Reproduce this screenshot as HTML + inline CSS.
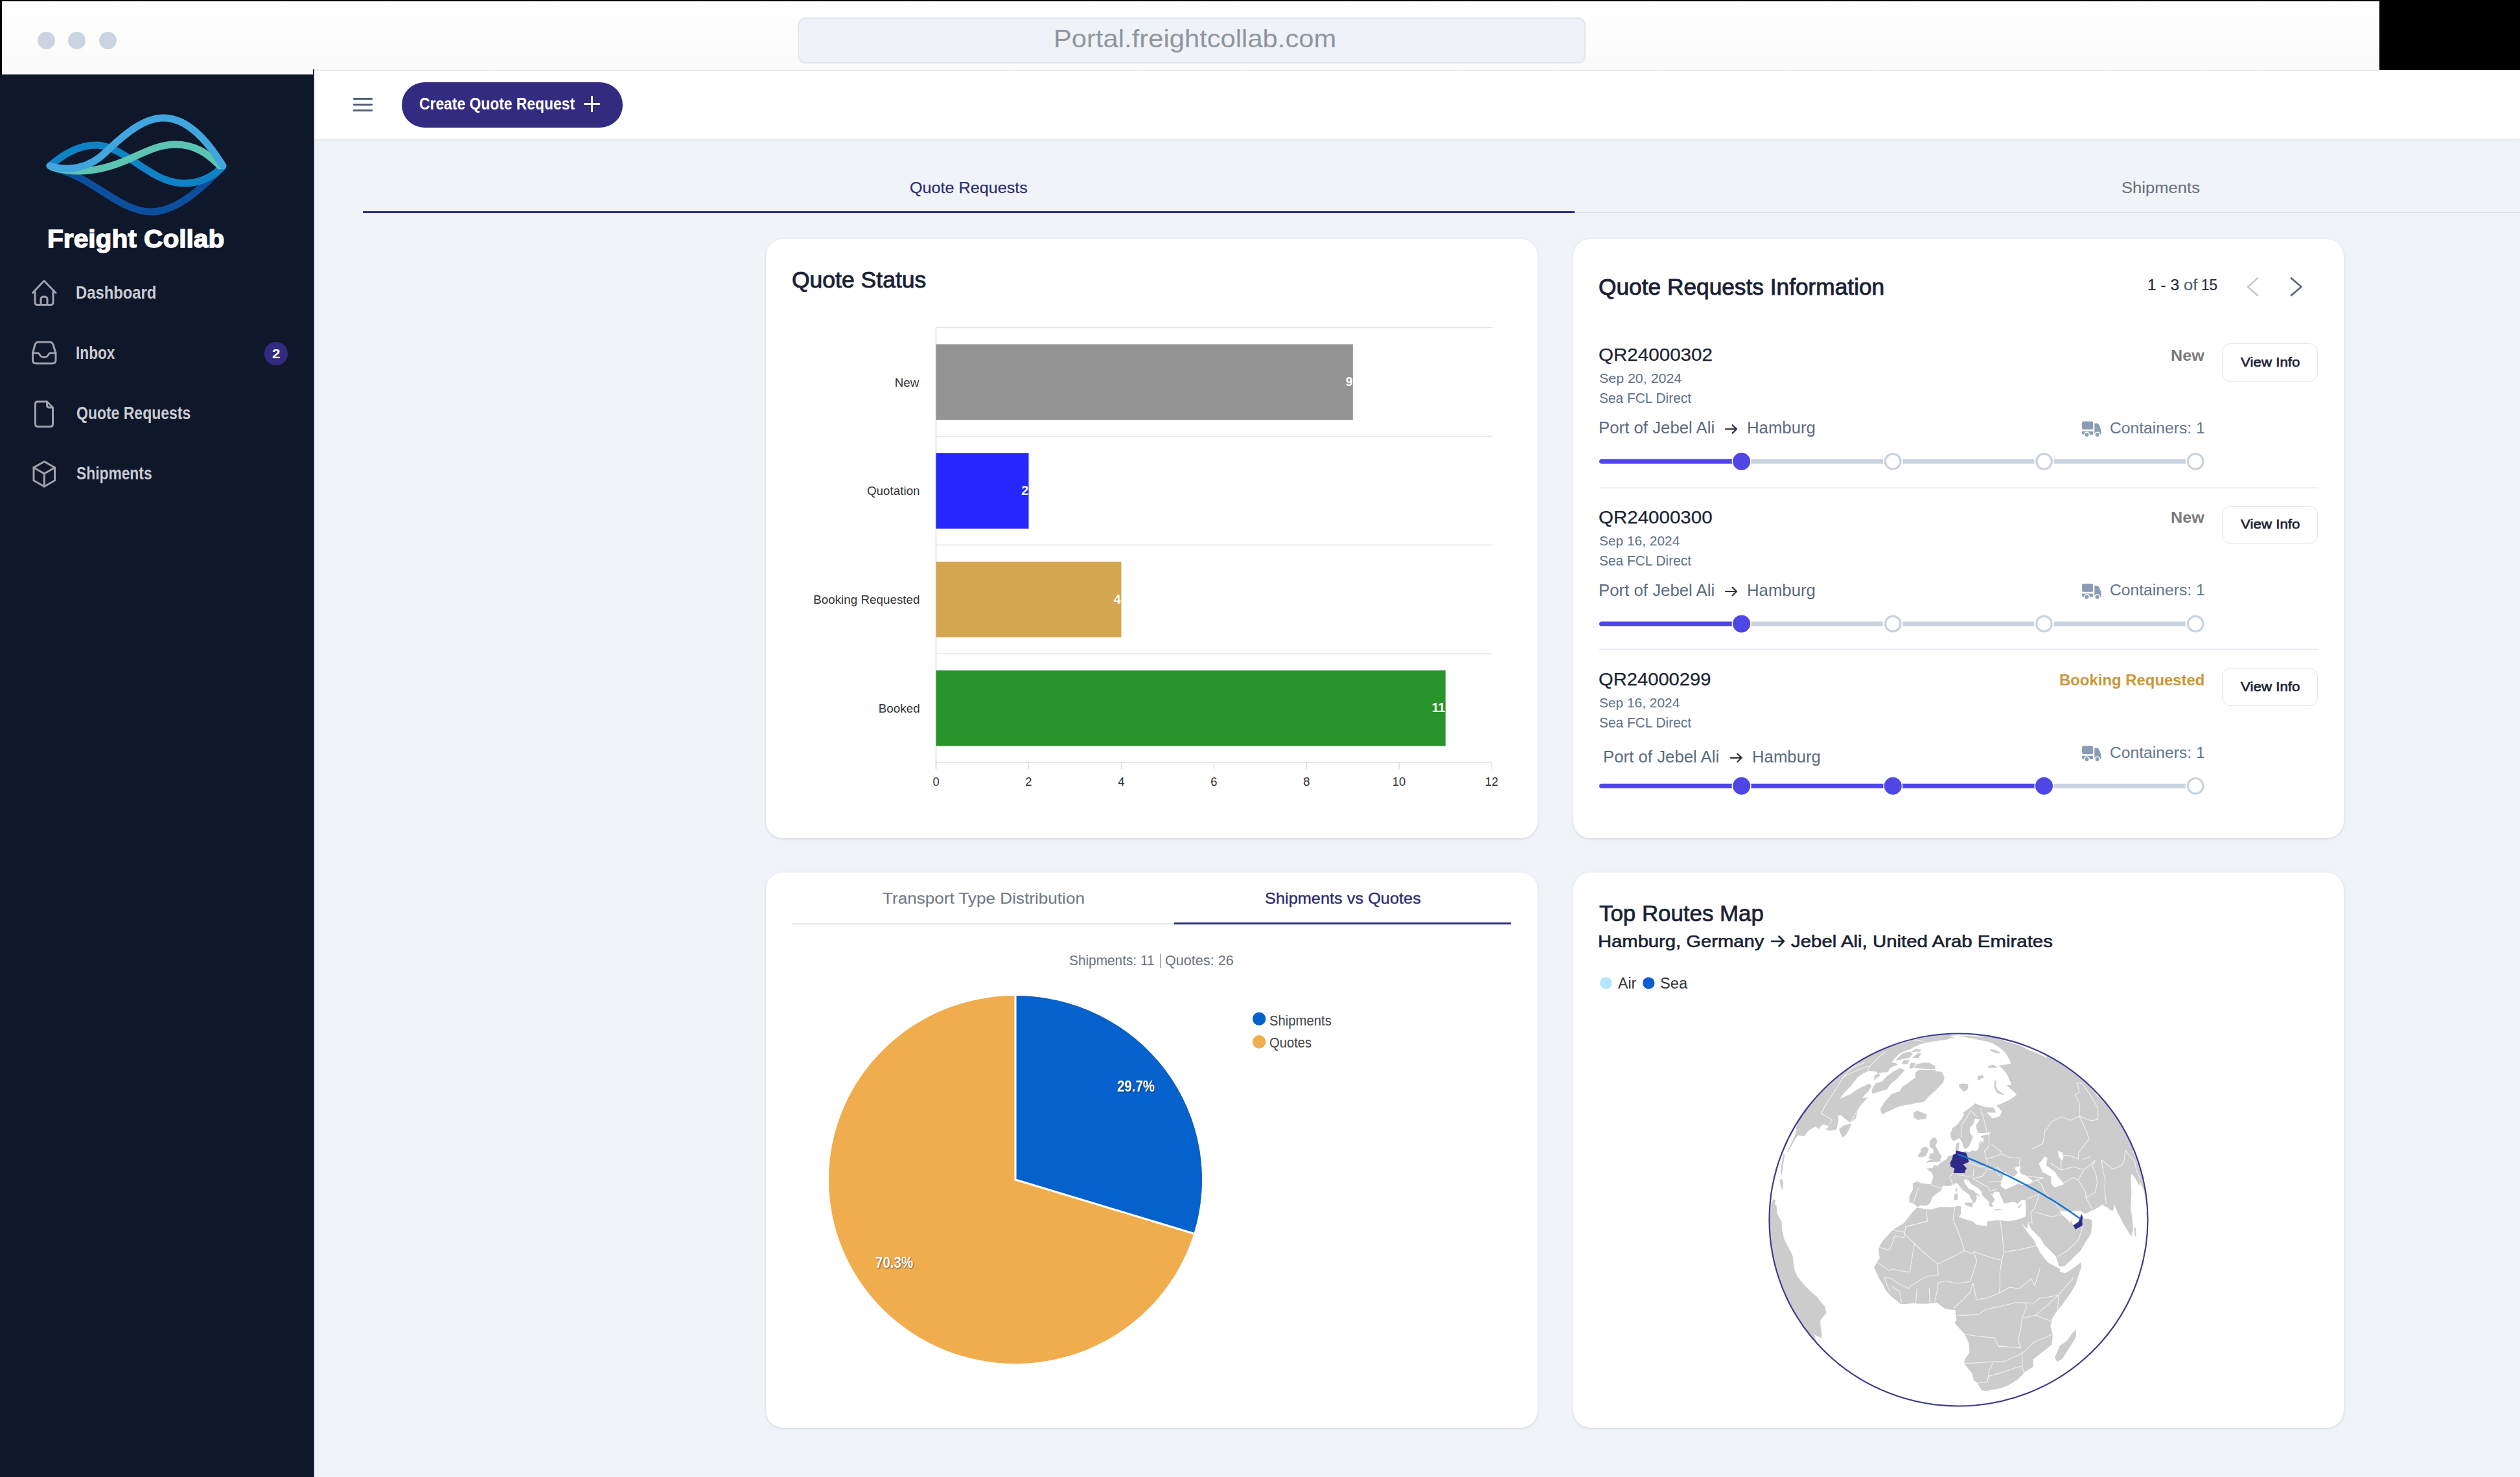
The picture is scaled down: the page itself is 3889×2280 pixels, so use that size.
<!DOCTYPE html>
<html><head><meta charset="utf-8"><style>
html,body{margin:0;padding:0;width:3889px;height:2280px;overflow:hidden;background:#000}
body{position:relative;font-family:"Liberation Sans",sans-serif}
.t{position:absolute;white-space:nowrap;line-height:1;transform-origin:0 0}
</style></head><body>
<div style="position:absolute;left:0;top:0;width:3889px;height:2280px;background:#000"></div>
<div style="position:absolute;left:3px;top:2px;width:3669px;height:113px;background:linear-gradient(#ffffff,#fafafa);border-bottom:1px solid #dfe6e9;box-sizing:border-box"></div>
<div style="position:absolute;left:57.5px;top:48.5px;width:27px;height:27px;border-radius:50%;background:#cbd5e1"></div>
<div style="position:absolute;left:104.5px;top:48.5px;width:27px;height:27px;border-radius:50%;background:#cbd5e1"></div>
<div style="position:absolute;left:152.5px;top:48.5px;width:27px;height:27px;border-radius:50%;background:#cbd5e1"></div>
<div style="position:absolute;left:1231px;top:27px;width:1216px;height:71px;box-sizing:border-box;border:2px solid #e2e7ec;border-radius:12px;background:#eff2f6"></div>
<div style="position:absolute;left:0;top:115px;width:485px;height:2165px;background:#0f172a"></div>
<svg style="position:absolute;left:0;top:0" width="485" height="420" viewBox="0 0 485 420" fill="none" stroke-linecap="round" stroke-linejoin="round">
<path d="M90,262 C140,272 185,327 233,327 C272,327 310,292 343,258" stroke="#0b4f9d" stroke-width="11"/>
<path d="M77,256 C100,236 125,224 148,224 C192,224 232,283 284,283 C311,283 330,271 343,258" stroke="#0f82c6" stroke-width="11"/>
<path d="M80,258 C120,270 160,264 205,243 C233,230 250,223 270,223 C300,223 320,236 339,256" stroke="#5bc4b3" stroke-width="11"/>
<path d="M77,256 C105,265 137,260 162,236 C192,207 222,182 252,182 C288,182 318,214 344,256" stroke="#42a6de" stroke-width="11"/>
</svg>
<svg style="position:absolute;left:0;top:0" width="485" height="800" viewBox="0 0 485 800" fill="none" stroke="#9ea3ad" stroke-width="3" stroke-linecap="round" stroke-linejoin="round">
<path d="M50.5,452 L68,433.5 L86,452"/>
<path d="M54,448 V467 Q54,470.5 57.5,470.5 H78.5 Q82,470.5 82,467 V448"/>
<path d="M63,470.5 V462 Q63,458 68,458 Q73,458 73,462 V470.5"/>
<path d="M50.5,545 V556 Q50.5,561 55.5,561 H81 Q86,561 86,556 V545 L82,532 Q80.5,528 76,528 H60 Q55.5,528 54,532 Z"/>
<path d="M50.5,545 H58 Q60,545 61,547 Q63,551.5 68,551.5 Q73,551.5 75,547 Q76,545 78,545 H86"/>
<path d="M58,620 H72.5 L81.5,629 V654.5 Q81.5,658.5 77.5,658.5 H58.5 Q54.5,658.5 54.5,654.5 V623.5 Q54.5,620 58,620 Z"/>
<path d="M72.5,620 V625.5 Q72.5,629 76,629 H81.5"/>
<path d="M68.3,712.5 L84.5,721.8 V741.8 L68.3,751 L52,741.8 V721.8 Z"/>
<path d="M52,721.8 L68.3,731.3 L84.5,721.8 M68.3,731.3 V751"/>
</svg>
<div style="position:absolute;left:408.4px;top:528.4px;width:35.2px;height:35.2px;border-radius:50%;background:#312c80"></div>
<div style="position:absolute;left:485px;top:215px;width:3404px;height:2065px;background:#f0f3f8"></div>
<div style="position:absolute;left:485px;top:107.5px;width:3404px;height:107.5px;background:#ffffff;border-top:1px solid #dfe6e9;box-sizing:border-box;box-shadow:0 1px 3px rgba(0,0,0,0.08)"></div>
<div style="position:absolute;left:544.6px;top:151.10000000000002px;width:30.2px;height:2.5px;border-radius:1px;background:#4f5f77"></div>
<div style="position:absolute;left:544.6px;top:160.4px;width:30.2px;height:2.5px;border-radius:1px;background:#4f5f77"></div>
<div style="position:absolute;left:544.6px;top:169.3px;width:30.2px;height:2.5px;border-radius:1px;background:#4f5f77"></div>
<div style="position:absolute;left:620.4px;top:127px;width:340.5px;height:70px;border-radius:35px;background:#322b80"></div>
<div style="position:absolute;left:901px;top:159.3px;width:25px;height:2.8px;background:#fff"></div>
<div style="position:absolute;left:912.1px;top:148px;width:2.8px;height:25px;background:#fff"></div>
<div style="position:absolute;left:2429.5px;top:326.5px;width:1460px;height:2px;background:#dde4ea"></div>
<div style="position:absolute;left:559.5px;top:325.5px;width:1870px;height:3.2px;background:#2e2a86"></div>
<div style="position:absolute;left:485px;top:2278px;width:3404px;height:1px;background:#e2e8f0"></div>
<div style="position:absolute;left:485px;top:2279px;width:3404px;height:1px;background:#f8f9fb"></div>
<div style="position:absolute;left:483px;top:107px;width:2px;height:2173px;background:linear-gradient(90deg,#0f172a,#3a4150)"></div>
<div style="position:absolute;left:1182px;top:369px;width:1191px;height:924.5px;background:#fff;border-radius:26px;box-shadow:0 1px 4px rgba(15,23,42,0.10),0 1px 2px rgba(15,23,42,0.06)"></div>
<div style="position:absolute;left:2428px;top:369px;width:1189px;height:924.5px;background:#fff;border-radius:26px;box-shadow:0 1px 4px rgba(15,23,42,0.10),0 1px 2px rgba(15,23,42,0.06)"></div>
<div style="position:absolute;left:1182px;top:1347px;width:1191px;height:857px;background:#fff;border-radius:26px;box-shadow:0 1px 4px rgba(15,23,42,0.10),0 1px 2px rgba(15,23,42,0.06)"></div>
<div style="position:absolute;left:2428px;top:1347px;width:1189px;height:857px;background:#fff;border-radius:26px;box-shadow:0 1px 4px rgba(15,23,42,0.10),0 1px 2px rgba(15,23,42,0.06)"></div>
<svg style="position:absolute;left:0;top:0" width="3889" height="2280" viewBox="0 0 3889 2280">
<rect x="1444.5" y="504.95" width="857.8000000000002" height="1.5" fill="#e3e3e3"/>
<rect x="1444.5" y="672.75" width="857.8000000000002" height="1.5" fill="#e3e3e3"/>
<rect x="1444.5" y="840.55" width="857.8000000000002" height="1.5" fill="#e3e3e3"/>
<rect x="1444.5" y="1008.35" width="857.8000000000002" height="1.5" fill="#e3e3e3"/>
<rect x="1444.5" y="1176.25" width="857.8000000000002" height="1.5" fill="#e3e3e3"/>
<rect x="1443.75" y="505.7" width="1.5" height="681.3" fill="#dcdcdc"/>
<rect x="1443.75" y="1177" width="1.5" height="10" fill="#dcdcdc"/>
<rect x="1586.7166666666667" y="1177" width="1.5" height="10" fill="#dcdcdc"/>
<rect x="1729.6833333333334" y="1177" width="1.5" height="10" fill="#dcdcdc"/>
<rect x="1872.65" y="1177" width="1.5" height="10" fill="#dcdcdc"/>
<rect x="2015.6166666666668" y="1177" width="1.5" height="10" fill="#dcdcdc"/>
<rect x="2158.5833333333335" y="1177" width="1.5" height="10" fill="#dcdcdc"/>
<rect x="2301.55" y="1177" width="1.5" height="10" fill="#dcdcdc"/>
<rect x="1444.5" y="531.4" width="643.3500000000001" height="116.8" fill="#939393"/>
<rect x="1444.5" y="699.2" width="142.9666666666667" height="116.8" fill="#2626ff"/>
<rect x="1444.5" y="867.0" width="285.9333333333334" height="116.8" fill="#d4a650"/>
<rect x="1444.5" y="1034.8" width="786.3166666666668" height="116.8" fill="#28932a"/>
</svg>
<svg style="position:absolute;left:0;top:0" width="3889" height="600" viewBox="0 0 3889 600" fill="none" stroke-width="2.7" stroke-linecap="round" stroke-linejoin="round">
<path d="M3484,429.5 L3469,442.8 L3484,456" stroke="#c3cad3"/>
<path d="M3536,429.5 L3551.5,442.8 L3536,456" stroke="#56657c"/>
</svg>
<div style="position:absolute;left:3429.3px;top:530.1px;width:148px;height:58.5px;box-sizing:border-box;border:1.5px solid #dfe4ea;border-radius:13px;background:#fff"></div>
<div style="position:absolute;left:3429.3px;top:780.7px;width:148px;height:58.5px;box-sizing:border-box;border:1.5px solid #dfe4ea;border-radius:13px;background:#fff"></div>
<div style="position:absolute;left:3429.3px;top:1031.1px;width:148px;height:58.5px;box-sizing:border-box;border:1.5px solid #dfe4ea;border-radius:13px;background:#fff"></div>
<svg style="position:absolute;left:0;top:0" width="3889" height="2280" viewBox="0 0 3889 2280">
<path d="M2663,662.4 H2680 M2673.5,656.1999999999999 L2680,662.4 L2673.5,668.6" fill="none" stroke="#283040" stroke-width="2.2" stroke-linecap="round" stroke-linejoin="round"/>
<g transform="translate(0,0)" fill="#8b9cb5">
<rect x="3213.1" y="650.5" width="17" height="12.6" rx="2"/>
<path d="M3213.1,665.8 H3230.1 V671 H3215.3 Q3213.1,671 3213.1,668.8 Z"/>
<path d="M3232.3,653.5 H3235.5 Q3238.5,653.5 3240.5,658 Q3242.8,663 3242.8,668 Q3242.8,671 3240,671 H3232.3 Z"/>
<circle cx="3220.5" cy="671" r="4.6" fill="#fff"/><circle cx="3220.5" cy="671" r="3" fill="#8b9cb5"/>
<circle cx="3236.7" cy="671" r="4.6" fill="#fff"/><circle cx="3236.7" cy="671" r="3" fill="#8b9cb5"/>
</g>
<line x1="2471.5" y1="712.3" x2="2687.6" y2="712.3" stroke="#4f46e5" stroke-width="7" stroke-linecap="round"/>
<line x1="2687.6" y1="712.3" x2="2921.2" y2="712.3" stroke="#c9d3df" stroke-width="7" stroke-linecap="round"/>
<line x1="2921.2" y1="712.3" x2="3154.5" y2="712.3" stroke="#c9d3df" stroke-width="7" stroke-linecap="round"/>
<line x1="3154.5" y1="712.3" x2="3388.2" y2="712.3" stroke="#c9d3df" stroke-width="7" stroke-linecap="round"/>
<circle cx="2687.6" cy="712.3" r="15" fill="#fff"/><circle cx="2687.6" cy="712.3" r="13.5" fill="#4f46e5"/>
<circle cx="2921.2" cy="712.3" r="15.5" fill="#fff"/><circle cx="2921.2" cy="712.3" r="11.8" fill="#fff" stroke="#c9d3df" stroke-width="3.2"/>
<circle cx="3154.5" cy="712.3" r="15.5" fill="#fff"/><circle cx="3154.5" cy="712.3" r="11.8" fill="#fff" stroke="#c9d3df" stroke-width="3.2"/>
<circle cx="3388.2" cy="712.3" r="15.5" fill="#fff"/><circle cx="3388.2" cy="712.3" r="11.8" fill="#fff" stroke="#c9d3df" stroke-width="3.2"/>
<rect x="2468" y="752.35" width="1109.5" height="1.5" fill="#e5eaf0"/>
<path d="M2663,913.0 H2680 M2673.5,906.8 L2680,913.0 L2673.5,919.2" fill="none" stroke="#283040" stroke-width="2.2" stroke-linecap="round" stroke-linejoin="round"/>
<g transform="translate(0,250.6)" fill="#8b9cb5">
<rect x="3213.1" y="650.5" width="17" height="12.6" rx="2"/>
<path d="M3213.1,665.8 H3230.1 V671 H3215.3 Q3213.1,671 3213.1,668.8 Z"/>
<path d="M3232.3,653.5 H3235.5 Q3238.5,653.5 3240.5,658 Q3242.8,663 3242.8,668 Q3242.8,671 3240,671 H3232.3 Z"/>
<circle cx="3220.5" cy="671" r="4.6" fill="#fff"/><circle cx="3220.5" cy="671" r="3" fill="#8b9cb5"/>
<circle cx="3236.7" cy="671" r="4.6" fill="#fff"/><circle cx="3236.7" cy="671" r="3" fill="#8b9cb5"/>
</g>
<line x1="2471.5" y1="962.9" x2="2687.6" y2="962.9" stroke="#4f46e5" stroke-width="7" stroke-linecap="round"/>
<line x1="2687.6" y1="962.9" x2="2921.2" y2="962.9" stroke="#c9d3df" stroke-width="7" stroke-linecap="round"/>
<line x1="2921.2" y1="962.9" x2="3154.5" y2="962.9" stroke="#c9d3df" stroke-width="7" stroke-linecap="round"/>
<line x1="3154.5" y1="962.9" x2="3388.2" y2="962.9" stroke="#c9d3df" stroke-width="7" stroke-linecap="round"/>
<circle cx="2687.6" cy="962.9" r="15" fill="#fff"/><circle cx="2687.6" cy="962.9" r="13.5" fill="#4f46e5"/>
<circle cx="2921.2" cy="962.9" r="15.5" fill="#fff"/><circle cx="2921.2" cy="962.9" r="11.8" fill="#fff" stroke="#c9d3df" stroke-width="3.2"/>
<circle cx="3154.5" cy="962.9" r="15.5" fill="#fff"/><circle cx="3154.5" cy="962.9" r="11.8" fill="#fff" stroke="#c9d3df" stroke-width="3.2"/>
<circle cx="3388.2" cy="962.9" r="15.5" fill="#fff"/><circle cx="3388.2" cy="962.9" r="11.8" fill="#fff" stroke="#c9d3df" stroke-width="3.2"/>
<rect x="2468" y="1001.65" width="1109.5" height="1.5" fill="#e5eaf0"/>
<path d="M2670.8,1169.8000000000002 H2687.8 M2681.3,1163.6000000000001 L2687.8,1169.8000000000002 L2681.3,1176.0000000000002" fill="none" stroke="#283040" stroke-width="2.2" stroke-linecap="round" stroke-linejoin="round"/>
<g transform="translate(0,501)" fill="#8b9cb5">
<rect x="3213.1" y="650.5" width="17" height="12.6" rx="2"/>
<path d="M3213.1,665.8 H3230.1 V671 H3215.3 Q3213.1,671 3213.1,668.8 Z"/>
<path d="M3232.3,653.5 H3235.5 Q3238.5,653.5 3240.5,658 Q3242.8,663 3242.8,668 Q3242.8,671 3240,671 H3232.3 Z"/>
<circle cx="3220.5" cy="671" r="4.6" fill="#fff"/><circle cx="3220.5" cy="671" r="3" fill="#8b9cb5"/>
<circle cx="3236.7" cy="671" r="4.6" fill="#fff"/><circle cx="3236.7" cy="671" r="3" fill="#8b9cb5"/>
</g>
<line x1="2471.5" y1="1213.3" x2="2687.6" y2="1213.3" stroke="#4f46e5" stroke-width="7" stroke-linecap="round"/>
<line x1="2687.6" y1="1213.3" x2="2921.2" y2="1213.3" stroke="#4f46e5" stroke-width="7" stroke-linecap="round"/>
<line x1="2921.2" y1="1213.3" x2="3154.5" y2="1213.3" stroke="#4f46e5" stroke-width="7" stroke-linecap="round"/>
<line x1="3154.5" y1="1213.3" x2="3388.2" y2="1213.3" stroke="#c9d3df" stroke-width="7" stroke-linecap="round"/>
<circle cx="2687.6" cy="1213.3" r="15" fill="#fff"/><circle cx="2687.6" cy="1213.3" r="13.5" fill="#4f46e5"/>
<circle cx="2921.2" cy="1213.3" r="15" fill="#fff"/><circle cx="2921.2" cy="1213.3" r="13.5" fill="#4f46e5"/>
<circle cx="3154.5" cy="1213.3" r="15" fill="#fff"/><circle cx="3154.5" cy="1213.3" r="13.5" fill="#4f46e5"/>
<circle cx="3388.2" cy="1213.3" r="15.5" fill="#fff"/><circle cx="3388.2" cy="1213.3" r="11.8" fill="#fff" stroke="#c9d3df" stroke-width="3.2"/>
</svg>
<div style="position:absolute;left:1222.9px;top:1424.7px;width:589.5px;height:2px;background:#e5e7eb"></div>
<div style="position:absolute;left:1812.4px;top:1423.6px;width:520px;height:3.4px;background:#2a2a80"></div>
<div style="position:absolute;left:1789.8px;top:1472px;width:1.6px;height:21.5px;background:#6b7280"></div>
<svg style="position:absolute;left:0;top:0" width="3889" height="2280" viewBox="0 0 3889 2280">
<ellipse cx="1567.0" cy="1821.0" rx="288.0" ry="284.0" fill="#f0ad4e"/>
<path d="M1567.0,1821.0 L1567.0,1537.0 A288.0,284.0 0 0 1 1842.38,1904.16 Z" fill="#0561cb"/>
<path d="M1842.38,1904.16 L1567.0,1821.0 L1567.0,1535.0" fill="none" stroke="#fff" stroke-width="3.2" stroke-linejoin="round"/>
<circle cx="1943.2" cy="1572.8" r="10.2" fill="#0561cb"/>
<circle cx="1943.2" cy="1608.3" r="10.2" fill="#f0ad4e"/>
</svg>
<svg style="position:absolute;left:0;top:0" width="3889" height="2280"><path d="M2734,1453 H2753 M2745.5,1445.5 L2753,1453 L2745.5,1460.5" fill="none" stroke="#1a2233" stroke-width="2.6" stroke-linecap="round" stroke-linejoin="round"/></svg>
<svg style="position:absolute;left:0;top:0" width="3889" height="2280" viewBox="0 0 3889 2280">
<circle cx="2478.3" cy="1517.6" r="9.2" fill="#b3e5fc"/>
<circle cx="2544.3" cy="1517.6" r="9.2" fill="#0b5ed0"/>
</svg>
<svg style="position:absolute;left:0;top:0" width="3889" height="2280" viewBox="0 0 3889 2280">
<defs><clipPath id="gclip"><ellipse cx="3022.5" cy="1883.0" rx="292.0" ry="287.5"/></clipPath></defs>
<ellipse cx="3022.5" cy="1883.0" rx="292.0" ry="287.5" fill="#fff"/>
<g clip-path="url(#gclip)">
<path d="M2958.0,1864.2 L2953.5,1869.0 L2949.0,1873.9 L2945.3,1878.7 L2941.7,1883.5 L2938.0,1888.2 L2932.7,1891.4 L2927.4,1894.6 L2922.1,1897.7 L2918.0,1902.1 L2913.9,1906.4 L2909.8,1910.8 L2905.7,1915.1 L2902.2,1921.2 L2898.7,1927.3 L2899.7,1934.6 L2900.8,1941.9 L2897.9,1946.7 L2895.0,1951.4 L2892.1,1956.2 L2894.9,1962.7 L2899.0,1971.9 L2902.8,1978.3 L2906.7,1984.6 L2908.7,1989.7 L2914.0,1995.9 L2919.4,2002.0 L2924.2,2005.8 L2929.1,2009.6 L2934.0,2013.2 L2940.0,2012.9 L2946.1,2012.5 L2952.2,2012.0 L2958.4,2012.4 L2964.7,2012.6 L2971.0,2012.8 L2977.1,2012.2 L2983.1,2011.5 L2989.1,2010.7 L2995.6,2015.8 L3002.2,2020.7 L3007.3,2021.3 L3012.3,2021.8 L3017.4,2022.4 L3018.1,2027.6 L3018.8,2032.8 L3019.4,2037.9 L3016.4,2042.1 L3020.2,2046.5 L3024.0,2050.8 L3027.8,2055.0 L3031.6,2059.1 L3034.2,2063.8 L3036.4,2069.2 L3038.6,2074.4 L3038.9,2079.1 L3039.1,2083.7 L3039.4,2088.1 L3036.1,2092.7 L3032.8,2097.2 L3031.8,2100.7 L3030.8,2104.1 L3033.4,2107.6 L3036.0,2111.0 L3038.6,2114.3 L3041.1,2117.5 L3043.6,2120.6 L3044.3,2124.0 L3045.0,2127.3 L3045.7,2130.4 L3048.7,2132.8 L3051.5,2135.0 L3052.9,2137.4 L3054.2,2139.7 L3055.5,2141.9 L3056.7,2144.0 L3057.9,2146.1 L3064.1,2147.2 L3068.8,2146.5 L3073.5,2145.6 L3078.2,2144.8 L3082.9,2143.8 L3087.6,2142.9 L3092.7,2141.1 L3097.8,2139.3 L3102.9,2136.3 L3108.0,2133.2 L3113.2,2129.9 L3116.1,2127.1 L3119.0,2124.2 L3121.8,2121.2 L3124.7,2118.1 L3131.1,2114.1 L3137.4,2109.9 L3137.6,2107.1 L3137.7,2104.3 L3137.7,2101.4 L3137.7,2098.4 L3143.0,2094.3 L3148.2,2090.0 L3154.4,2085.3 L3160.5,2080.4 L3166.5,2075.5 L3166.9,2071.6 L3167.3,2067.7 L3167.6,2063.8 L3167.8,2059.7 L3166.7,2055.6 L3165.6,2051.4 L3164.4,2047.1 L3165.6,2041.4 L3166.8,2035.5 L3172.3,2026.9 L3177.2,2020.9 L3182.0,2014.8 L3186.6,2008.6 L3191.1,2002.3 L3195.4,1995.9 L3199.5,1989.3 L3203.5,1982.7 L3205.6,1975.7 L3207.6,1968.6 L3210.1,1961.8 L3212.4,1955.0 L3211.1,1948.8 L3207.3,1951.7 L3203.5,1954.6 L3199.5,1957.4 L3195.5,1960.2 L3191.4,1962.9 L3187.2,1965.6 L3178.7,1963.0 L3179.0,1958.1 L3176.2,1957.2 L3171.2,1954.6 L3166.1,1952.1 L3161.0,1949.4 L3157.8,1945.5 L3154.7,1941.4 L3151.5,1937.4 L3148.2,1933.3 L3145.9,1928.6 L3143.5,1923.8 L3141.1,1919.0 L3138.7,1914.2 L3134.9,1909.6 L3131.1,1904.9 L3127.3,1900.2 L3123.3,1894.2 L3119.4,1888.2 L3117.2,1881.5 L3112.4,1882.8 L3107.5,1884.0 L3101.9,1884.6 L3096.2,1885.1 L3091.6,1884.6 L3087.0,1884.1 L3082.3,1883.6 L3076.9,1884.3 L3071.4,1884.9 L3065.9,1885.5 L3067.0,1892.4 L3061.7,1892.0 L3056.5,1891.6 L3051.2,1891.1 L3044.4,1885.5 L3036.2,1883.3 L3031.7,1881.7 L3027.3,1880.1 L3022.9,1878.5 L3025.9,1874.5 L3026.2,1868.4 L3026.6,1862.4 L3022.1,1861.4 L3017.8,1862.4 L3013.5,1863.4 L3008.7,1863.4 L3004.0,1863.3 L2999.2,1863.2 L2994.4,1863.0 L2989.3,1864.5 L2984.1,1865.9 L2978.9,1867.3 L2974.7,1866.7 L2970.5,1866.2 L2966.3,1865.5 L2962.1,1864.9Z M2959.8,1862.9 L2964.3,1860.5 L2968.6,1861.1 L2973.0,1861.6 L2978.4,1857.7 L2982.2,1848.5 L2987.5,1843.0 L2992.8,1839.9 L2997.3,1835.7 L2996.8,1832.2 L3000.0,1830.0 L3005.5,1831.2 L3012.6,1829.5 L3018.5,1826.2 L3021.8,1827.6 L3023.6,1830.6 L3029.3,1837.5 L3034.0,1840.6 L3038.7,1843.7 L3042.0,1850.8 L3045.4,1857.8 L3048.8,1855.1 L3050.5,1851.5 L3050.3,1844.5 L3055.3,1847.7 L3053.4,1843.8 L3048.9,1841.6 L3046.0,1837.8 L3042.1,1836.6 L3038.3,1835.2 L3035.4,1829.9 L3032.0,1827.5 L3030.7,1821.2 L3036.0,1820.0 L3036.6,1824.0 L3038.3,1821.4 L3041.5,1827.2 L3046.1,1829.9 L3052.8,1833.9 L3058.3,1839.9 L3058.8,1843.9 L3062.0,1848.1 L3069.0,1854.4 L3069.9,1861.3 L3073.4,1863.0 L3076.2,1862.6 L3073.8,1856.9 L3077.1,1854.9 L3078.6,1851.7 L3075.3,1846.8 L3072.0,1842.0 L3076.2,1844.5 L3077.4,1839.8 L3083.1,1839.4 L3086.0,1841.0 L3085.6,1842.6 L3089.8,1850.5 L3092.2,1857.2 L3095.9,1857.6 L3100.5,1856.5 L3105.0,1855.4 L3110.4,1856.3 L3114.0,1858.1 L3119.8,1852.6 L3126.0,1852.0 L3126.0,1857.8 L3126.8,1865.8 L3126.2,1871.7 L3126.3,1875.3 L3125.4,1878.6 L3121.3,1880.1 L3117.2,1881.5 L3119.4,1888.2 L3123.9,1892.8 L3128.5,1897.4 L3129.9,1887.8 L3132.5,1892.8 L3135.0,1897.8 L3139.4,1902.1 L3143.7,1906.4 L3148.0,1910.6 L3151.6,1916.2 L3155.0,1921.8 L3160.8,1927.1 L3164.8,1931.2 L3168.7,1935.3 L3172.6,1939.3 L3174.3,1943.9 L3175.8,1948.5 L3178.1,1955.0 L3185.8,1954.7 L3189.7,1951.1 L3193.5,1947.5 L3197.2,1943.9 L3200.8,1940.3 L3204.4,1936.8 L3208.0,1933.4 L3211.4,1929.9 L3216.8,1920.0 L3220.4,1914.7 L3223.8,1909.3 L3227.0,1903.9 L3227.7,1897.3 L3228.2,1890.7 L3228.6,1884.1 L3223.2,1881.4 L3216.0,1881.2 L3214.0,1876.9 L3211.9,1872.5 L3211.3,1876.2 L3210.1,1879.5 L3208.4,1884.8 L3203.9,1887.9 L3199.3,1891.0 L3197.4,1886.5 L3195.4,1882.1 L3195.4,1888.5 L3191.0,1883.1 L3187.0,1879.5 L3183.1,1875.8 L3179.1,1872.1 L3179.9,1868.6 L3184.7,1869.4 L3189.5,1870.2 L3193.8,1870.1 L3198.0,1869.9 L3202.1,1869.6 L3206.2,1869.3 L3210.3,1869.0 L3217.6,1873.7 L3221.2,1872.2 L3224.8,1870.6 L3228.3,1869.0 L3231.7,1867.4 L3235.1,1865.4 L3238.4,1863.4 L3241.7,1861.4 L3244.8,1859.3 L3247.5,1861.8 L3253.2,1863.9 L3254.2,1866.6 L3256.7,1867.9 L3261.4,1868.8 L3262.5,1858.6 L3264.4,1863.4 L3266.3,1867.8 L3268.1,1872.2 L3270.5,1876.7 L3272.9,1881.1 L3275.1,1885.6 L3277.6,1889.9 L3280.0,1894.2 L3282.9,1898.8 L3285.6,1903.4 L3289.6,1908.4 L3290.2,1903.8 L3292.1,1898.7 L3291.6,1892.4 L3291.0,1886.1 L3290.3,1879.8 L3289.6,1874.6 L3288.8,1869.4 L3287.9,1864.2 L3288.5,1858.4 L3288.9,1852.6 L3289.2,1846.7 L3289.3,1840.9 L3289.2,1835.1 L3288.7,1828.0 L3288.1,1820.9 L3288.6,1817.1 L3289.0,1813.4 L3289.9,1812.2 L3292.3,1815.2 L3294.6,1818.3 L3296.6,1821.5 L3298.5,1824.6 L3300.2,1827.8 L3301.9,1831.0 L3301.9,1824.2 L3303.6,1827.3 L3305.2,1830.4 L3306.7,1833.5 L3308.0,1836.6 L3309.0,1840.9 L3310.0,1845.2 L3310.9,1848.1 L3311.6,1851.1 L3312.3,1854.0 L3312.9,1857.0 L3313.4,1859.5 L3313.7,1862.1 L3313.9,1864.6 L3314.1,1867.1 L3313.8,1863.6 L3313.6,1860.1 L3313.3,1856.6 L3312.9,1853.1 L3312.4,1849.6 L3311.9,1846.1 L3311.2,1842.6 L3310.4,1839.2 L3309.6,1835.7 L3308.6,1832.3 L3307.6,1828.8 L3306.4,1825.4 L3307.5,1826.8 L3308.4,1828.2 L3309.1,1829.7 L3309.4,1830.1 L3309.6,1830.5 L3308.0,1822.8 L3306.3,1815.1 L3304.3,1807.6 L3303.1,1803.4 L3301.8,1799.2 L3300.3,1795.1 L3299.0,1791.8 L3297.5,1788.5 L3296.0,1785.2 L3294.3,1782.0 L3293.3,1778.4 L3292.2,1774.8 L3291.0,1771.2 L3289.5,1767.4 L3287.9,1763.5 L3286.2,1759.7 L3284.4,1756.0 L3281.4,1750.1 L3278.3,1744.4 L3275.1,1738.7 L3269.6,1729.7 L3263.4,1720.5 L3260.5,1716.4 L3257.5,1712.3 L3254.4,1708.4 L3251.4,1705.0 L3248.9,1703.0 L3243.6,1696.8 L3240.2,1692.8 L3236.7,1688.7 L3238.2,1690.9 L3238.5,1692.0 L3238.7,1693.1 L3238.7,1694.3 L3233.5,1688.0 L3233.7,1687.4 L3233.8,1686.7 L3230.2,1682.7 L3226.5,1678.7 L3228.2,1679.6 L3229.6,1680.6 L3233.5,1684.3 L3237.3,1688.2 L3234.4,1685.2 L3231.5,1682.2 L3228.1,1678.8 L3224.5,1675.5 L3223.4,1674.8 L3217.4,1669.4 L3211.4,1664.3 L3207.5,1661.0 L3203.5,1657.8 L3200.1,1655.1 L3196.6,1652.5 L3193.1,1649.9 L3189.5,1647.4 L3185.9,1645.0 L3182.3,1642.6 L3178.1,1640.0 L3173.8,1637.5 L3169.5,1635.2 L3165.2,1632.9 L3161.9,1631.4 L3158.5,1630.0 L3155.1,1628.6 L3156.2,1629.5 L3157.2,1630.4 L3158.1,1631.4 L3158.9,1632.3 L3159.7,1633.3 L3155.5,1631.2 L3151.4,1629.2 L3147.3,1627.4 L3143.1,1625.6 L3139.0,1623.9 L3134.9,1622.4 L3130.9,1620.9 L3128.8,1619.8 L3126.7,1618.7 L3124.6,1617.6 L3122.5,1616.6 L3120.3,1615.6 L3118.1,1614.6 L3115.9,1613.6 L3113.1,1612.7 L3110.3,1611.8 L3107.5,1610.9 L3104.8,1610.0 L3102.0,1609.2 L3099.3,1608.5 L3096.5,1607.8 L3093.8,1607.1 L3091.0,1606.4 L3092.2,1606.0 L3093.3,1605.7 L3094.3,1605.4 L3095.1,1605.3 L3095.9,1605.1 L3100.4,1606.1 L3104.9,1607.3 L3109.5,1608.6 L3114.1,1610.0 L3118.9,1611.6 L3123.7,1613.3 L3119.0,1611.7 L3114.4,1610.1 L3109.9,1608.7 L3105.4,1607.4 L3101.0,1606.2 L3096.6,1605.1 L3092.8,1604.3 L3089.1,1603.6 L3085.5,1603.1 L3081.9,1602.7 L3078.7,1602.1 L3075.6,1601.7 L3072.5,1601.2 L3069.4,1600.9 L3066.4,1600.5 L3063.5,1600.3 L3060.6,1600.1 L3057.7,1599.9 L3054.9,1599.8 L3052.2,1599.7 L3049.5,1599.7 L3047.2,1599.5 L3044.9,1599.3 L3042.6,1599.2 L3040.3,1599.1 L3038.0,1599.0 L3035.8,1598.9 L3033.5,1598.9 L3031.3,1598.9 L3029.1,1598.9 L3026.9,1598.9 L3024.7,1599.0 L3022.5,1599.0 L3021.9,1599.1 L3024.0,1599.4 L3026.1,1599.7 L3028.1,1600.0 L3030.0,1600.3 L3031.9,1600.7 L3033.8,1601.1 L3035.5,1601.5 L3037.3,1601.9 L3038.9,1602.4 L3040.8,1602.6 L3042.7,1602.9 L3044.5,1603.2 L3046.3,1603.5 L3048.1,1603.8 L3049.8,1604.2 L3051.6,1604.5 L3053.3,1604.9 L3055.0,1605.3 L3056.6,1605.7 L3058.4,1606.0 L3060.1,1606.4 L3061.9,1606.7 L3063.6,1607.1 L3065.3,1607.5 L3067.0,1607.9 L3068.7,1608.3 L3070.4,1608.7 L3072.1,1609.2 L3073.3,1609.8 L3074.5,1610.3 L3075.7,1610.9 L3076.8,1611.5 L3077.9,1612.2 L3078.9,1612.8 L3079.9,1613.4 L3080.9,1614.0 L3081.8,1614.7 L3082.7,1615.3 L3083.6,1616.0 L3084.6,1616.6 L3085.6,1617.2 L3086.5,1617.9 L3087.4,1618.5 L3088.2,1619.2 L3089.1,1619.8 L3089.9,1620.5 L3090.7,1621.2 L3091.4,1621.9 L3092.1,1622.5 L3092.8,1623.2 L3093.4,1623.9 L3094.1,1624.6 L3094.6,1625.3 L3095.2,1626.0 L3095.7,1626.7 L3096.2,1627.4 L3096.7,1628.1 L3097.1,1628.8 L3097.5,1629.5 L3097.9,1630.2 L3098.3,1630.9 L3098.6,1631.6 L3099.1,1632.3 L3099.6,1633.1 L3100.0,1633.8 L3100.4,1634.5 L3100.8,1635.2 L3101.2,1636.0 L3101.6,1636.7 L3101.9,1637.4 L3102.2,1638.1 L3102.5,1638.9 L3102.7,1639.6 L3102.9,1640.3 L3103.1,1641.1 L3103.3,1641.8 L3101.1,1642.3 L3098.9,1642.8 L3096.6,1643.2 L3094.3,1643.6 L3091.9,1644.0 L3089.5,1644.3 L3087.0,1644.6 L3084.5,1644.9 L3085.5,1645.7 L3086.5,1646.4 L3087.4,1647.2 L3088.3,1648.0 L3089.2,1648.8 L3090.1,1649.7 L3091.0,1650.5 L3091.8,1651.4 L3092.6,1652.3 L3093.4,1653.2 L3094.1,1654.1 L3094.8,1655.1 L3095.5,1656.1 L3096.2,1657.0 L3096.8,1658.0 L3097.4,1659.1 L3098.0,1660.1 L3098.5,1661.2 L3099.0,1662.2 L3099.5,1663.3 L3099.9,1664.4 L3100.3,1665.5 L3100.7,1666.7 L3101.6,1668.2 L3102.5,1669.8 L3103.3,1671.4 L3103.5,1672.6 L3103.5,1673.7 L3103.6,1674.9 L3101.8,1675.0 L3100.0,1675.1 L3098.2,1675.2 L3096.4,1675.3 L3100.6,1678.8 L3104.6,1682.3 L3108.5,1686.1 L3112.3,1689.9 L3111.2,1690.8 L3110.2,1691.6 L3109.1,1692.4 L3108.0,1693.2 L3106.8,1694.0 L3105.7,1694.8 L3104.5,1695.5 L3103.3,1696.3 L3102.0,1697.1 L3100.8,1697.8 L3099.5,1698.5 L3098.2,1699.2 L3096.8,1699.9 L3095.4,1700.6 L3093.9,1701.3 L3092.3,1702.0 L3090.8,1702.7 L3089.2,1703.3 L3087.6,1703.9 L3086.0,1704.5 L3084.3,1705.1 L3082.7,1705.7 L3081.0,1706.3 L3085.2,1711.0 L3089.5,1715.8 L3088.5,1718.2 L3087.3,1720.6 L3086.1,1723.1 L3084.0,1723.8 L3081.8,1724.5 L3079.6,1725.2 L3077.4,1725.9 L3075.2,1726.6 L3070.4,1721.9 L3065.8,1717.2 L3067.9,1717.3 L3070.0,1717.4 L3072.1,1717.4 L3074.2,1717.4 L3076.3,1717.4 L3078.4,1717.4 L3080.5,1717.4 L3078.5,1713.5 L3076.4,1709.6 L3074.3,1709.5 L3072.2,1709.5 L3070.1,1709.4 L3068.0,1709.3 L3065.9,1709.2 L3063.9,1709.0 L3061.5,1708.3 L3059.2,1707.5 L3056.9,1706.7 L3054.6,1705.9 L3052.4,1705.0 L3050.3,1704.2 L3048.1,1703.3 L3046.6,1704.6 L3045.1,1705.9 L3043.5,1707.2 L3041.8,1708.4 L3040.0,1709.7 L3038.2,1710.9 L3036.6,1712.4 L3034.8,1713.8 L3033.0,1715.2 L3031.1,1716.6 L3029.2,1718.0 L3031.1,1720.8 L3029.2,1723.9 L3027.2,1727.0 L3025.0,1730.0 L3022.7,1733.1 L3020.2,1736.2 L3016.9,1738.8 L3013.3,1741.3 L3011.7,1745.8 L3009.9,1750.4 L3010.9,1757.2 L3014.4,1761.4 L3017.6,1759.9 L3020.7,1758.5 L3023.8,1757.0 L3027.7,1762.8 L3029.2,1767.6 L3030.8,1772.4 L3034.6,1773.2 L3038.4,1769.3 L3040.4,1766.9 L3042.6,1760.8 L3044.5,1754.7 L3040.4,1748.8 L3039.7,1741.3 L3041.7,1739.1 L3043.7,1736.9 L3045.6,1734.7 L3048.0,1726.6 L3050.4,1727.2 L3052.8,1727.8 L3055.3,1728.3 L3053.3,1731.3 L3051.3,1734.3 L3049.1,1737.4 L3051.0,1744.2 L3053.0,1748.9 L3056.5,1749.0 L3060.1,1748.9 L3062.7,1748.8 L3065.3,1748.7 L3067.9,1748.5 L3070.5,1748.3 L3073.1,1748.1 L3070.8,1749.7 L3068.4,1751.3 L3065.7,1751.7 L3063.0,1752.2 L3060.2,1752.6 L3057.7,1754.0 L3055.1,1755.5 L3058.0,1756.3 L3060.8,1757.1 L3061.2,1763.5 L3056.5,1760.8 L3053.3,1766.8 L3054.2,1770.4 L3051.8,1775.3 L3048.2,1777.0 L3044.5,1775.5 L3039.2,1778.6 L3035.8,1777.8 L3032.5,1777.0 L3028.8,1779.4 L3025.8,1779.0 L3022.8,1778.6 L3022.2,1776.2 L3023.1,1769.7 L3024.1,1762.9 L3021.4,1764.2 L3018.6,1765.6 L3017.9,1772.9 L3017.5,1775.7 L3018.6,1780.4 L3016.7,1782.3 L3013.4,1783.1 L3010.0,1784.0 L3006.5,1784.8 L3004.0,1789.4 L3000.2,1791.4 L2996.4,1793.4 L2989.9,1799.8 L2984.5,1798.6 L2982.4,1803.2 L2977.7,1803.2 L2973.0,1803.2 L2977.0,1807.2 L2980.7,1809.6 L2983.2,1815.3 L2982.4,1821.1 L2979.9,1828.3 L2975.9,1827.8 L2972.0,1827.3 L2965.2,1826.4 L2961.4,1825.0 L2957.7,1823.7 L2951.8,1827.1 L2952.0,1836.3 L2949.3,1841.6 L2946.5,1846.9 L2946.6,1856.1 L2950.8,1856.9 L2956.6,1860.4 L2959.0,1863.3Z M2995.1,1792.6 L2994.1,1790.6 L2997.1,1784.2 L2992.7,1780.5 L2991.3,1776.1 L2989.4,1773.5 L2986.9,1768.6 L2989.5,1763.7 L2988.0,1756.7 L2983.1,1756.0 L2978.2,1761.3 L2978.0,1765.5 L2977.8,1770.6 L2980.5,1772.2 L2983.2,1773.7 L2983.9,1777.6 L2983.3,1780.4 L2978.8,1780.3 L2977.0,1785.8 L2975.4,1787.5 L2981.0,1789.2 L2981.5,1789.7 L2977.6,1790.2 L2971.8,1794.7 L2977.1,1794.3 L2982.7,1793.8 L2986.4,1793.7 L2990.1,1793.6Z M2972.9,1770.3 L2977.0,1773.8 L2974.4,1779.6 L2972.0,1784.5 L2968.5,1785.4 L2964.9,1786.3 L2960.8,1786.5 L2960.0,1782.9 L2964.1,1778.3 L2964.1,1773.5 L2970.2,1769.9Z M2959.1,1714.2 L2960.8,1715.1 L2962.5,1715.9 L2964.3,1716.6 L2966.0,1717.4 L2967.9,1718.1 L2969.7,1718.9 L2971.6,1719.6 L2973.4,1720.3 L2972.4,1726.7 L2969.8,1727.2 L2967.3,1727.7 L2964.7,1728.1 L2962.1,1728.5 L2959.5,1728.8 L2957.2,1727.5 L2955.0,1726.2 L2952.9,1724.8 L2953.0,1720.1 L2953.9,1717.1Z M2904.4,1720.2 L2903.6,1718.1 L2902.9,1716.0 L2902.3,1713.9 L2901.8,1711.8 L2904.6,1707.1 L2907.5,1702.6 L2910.6,1698.2 L2915.1,1693.2 L2919.8,1688.4 L2925.8,1686.5 L2931.8,1684.6 L2932.9,1682.2 L2934.1,1679.9 L2935.4,1677.7 L2942.9,1672.9 L2947.2,1669.7 L2951.6,1666.6 L2956.1,1663.6 L2956.0,1662.9 L2955.8,1662.1 L2955.8,1661.4 L2955.7,1660.6 L2955.7,1659.9 L2955.6,1659.1 L2955.7,1658.4 L2955.7,1657.6 L2955.7,1656.9 L2955.8,1656.1 L2957.4,1654.9 L2959.0,1653.7 L2960.6,1652.5 L2962.3,1651.4 L2964.4,1651.5 L2966.6,1651.6 L2968.8,1651.7 L2970.9,1651.7 L2973.1,1651.7 L2974.7,1651.7 L2976.3,1651.8 L2977.9,1651.8 L2979.5,1651.8 L2981.1,1651.8 L2982.7,1651.7 L2984.3,1651.7 L2984.9,1651.9 L2985.5,1652.2 L2986.1,1652.4 L2986.8,1652.6 L2987.4,1652.8 L2988.0,1653.0 L2988.7,1653.2 L2989.3,1653.4 L2989.9,1653.5 L2990.6,1653.7 L2991.2,1653.8 L2991.9,1654.0 L2992.5,1654.1 L2993.2,1654.2 L2993.9,1654.4 L2994.5,1654.5 L2995.2,1654.6 L2995.9,1654.7 L2996.5,1654.8 L2997.2,1654.8 L2997.2,1655.2 L2997.3,1655.7 L2997.4,1656.1 L2997.5,1656.5 L2997.6,1657.0 L2997.8,1657.4 L2997.9,1657.8 L2998.1,1658.3 L2998.3,1658.7 L2998.5,1659.2 L2998.8,1659.6 L2999.0,1660.1 L2999.3,1660.5 L2999.6,1660.9 L2999.9,1661.4 L3000.2,1661.8 L3000.6,1662.3 L3001.0,1662.7 L3000.5,1664.1 L3000.2,1665.5 L2999.9,1666.9 L2999.6,1668.3 L2999.5,1669.8 L2996.8,1672.8 L2994.0,1675.9 L2991.2,1679.0 L2988.3,1682.2 L2984.3,1685.8 L2980.2,1689.4 L2976.0,1693.0 L2972.8,1696.7 L2969.6,1700.5 L2967.3,1701.0 L2964.9,1701.5 L2962.5,1702.0 L2960.1,1702.5 L2957.6,1702.9 L2955.2,1703.3 L2952.5,1703.8 L2949.9,1704.4 L2947.2,1704.9 L2944.5,1705.4 L2941.8,1705.9 L2939.0,1706.3 L2936.3,1706.7 L2933.6,1707.1 L2928.9,1709.1 L2924.2,1711.0 L2919.5,1712.9 L2914.5,1715.4 L2909.4,1717.8Z M3028.7,1672.5 L3029.6,1672.7 L3030.6,1672.8 L3031.6,1672.9 L3032.6,1673.0 L3033.6,1673.0 L3034.6,1673.1 L3035.6,1673.2 L3036.6,1673.2 L3037.6,1673.3 L3037.4,1675.5 L3037.1,1677.8 L3036.7,1680.2 L3036.2,1682.5 L3035.0,1683.0 L3033.8,1683.5 L3032.7,1684.0 L3031.4,1684.4 L3030.2,1684.9 L3028.7,1683.5 L3027.3,1682.1 L3026.0,1680.7 L3024.7,1679.3 L3023.5,1677.9 L3023.4,1673.4 L3024.3,1673.3 L3025.2,1673.2 L3026.1,1673.0 L3026.9,1672.9 L3027.8,1672.7Z M3093.4,1691.0 L3090.5,1690.1 L3087.7,1689.2 L3084.8,1688.2 L3082.1,1687.2 L3079.9,1683.6 L3077.7,1680.2 L3077.7,1679.0 L3077.7,1677.7 L3077.6,1676.4 L3077.5,1675.2 L3077.4,1673.9 L3077.6,1673.1 L3077.9,1672.2 L3078.1,1671.3 L3078.2,1670.4 L3078.4,1669.5 L3078.5,1668.7 L3078.6,1667.8 L3078.6,1667.0 L3080.7,1668.2 L3080.7,1669.2 L3080.7,1670.2 L3080.7,1671.2 L3080.6,1672.2 L3080.4,1673.2 L3080.3,1674.3 L3080.1,1675.3 L3080.7,1677.0 L3081.3,1678.7 L3081.8,1680.4 L3082.3,1682.1 L3086.5,1685.0 L3090.8,1687.9Z M3052.3,1667.5 L3052.3,1666.5 L3052.2,1665.6 L3052.0,1664.6 L3051.9,1663.6 L3051.6,1662.7 L3051.4,1661.7 L3052.1,1661.6 L3052.8,1661.4 L3053.5,1661.2 L3054.2,1661.0 L3054.8,1660.8 L3055.5,1660.6 L3056.2,1660.4 L3056.8,1660.2 L3057.5,1660.0 L3058.2,1659.7 L3058.8,1659.5 L3059.5,1659.2 L3060.1,1660.2 L3060.7,1661.2 L3061.2,1662.2 L3061.7,1663.3 L3061.1,1663.6 L3060.5,1664.0 L3059.9,1664.3 L3059.2,1664.6 L3058.6,1664.9 L3057.9,1665.3 L3057.3,1665.6 L3056.6,1665.9 L3055.9,1666.2 L3055.2,1666.5 L3054.5,1666.7 L3053.8,1667.0 L3053.0,1667.3Z M3083.2,1647.7 L3081.4,1647.9 L3079.6,1648.1 L3077.7,1648.3 L3075.9,1648.5 L3074.0,1648.6 L3072.1,1648.7 L3070.2,1648.8 L3069.6,1648.2 L3069.0,1647.6 L3068.4,1647.1 L3067.8,1646.5 L3067.1,1646.0 L3068.2,1645.7 L3069.3,1645.4 L3070.4,1645.1 L3071.4,1644.8 L3072.5,1644.5 L3073.5,1644.2 L3074.5,1643.8 L3075.5,1643.4 L3076.8,1644.1 L3078.1,1644.7 L3079.4,1645.4 L3080.7,1646.2 L3082.0,1646.9Z M3087.6,1625.9 L3080.5,1625.7 L3079.3,1625.2 L3078.0,1624.7 L3076.8,1624.2 L3075.5,1623.7 L3074.3,1623.3 L3073.0,1622.8 L3071.8,1622.4 L3071.7,1621.8 L3071.6,1621.1 L3071.5,1620.4 L3071.3,1619.7 L3071.1,1619.1 L3072.6,1619.4 L3074.1,1619.7 L3075.6,1620.1 L3077.0,1620.5 L3078.5,1620.9 L3080.0,1621.3 L3081.5,1621.8 L3083.0,1622.2 L3083.9,1622.8 L3084.7,1623.4 L3085.4,1624.0 L3086.2,1624.6 L3086.9,1625.2Z M3173.2,1636.8 L3169.3,1634.5 L3165.4,1632.4 L3161.5,1630.3 L3158.7,1629.1 L3156.0,1627.9 L3153.1,1626.9 L3150.2,1625.9 L3147.2,1625.0 L3150.0,1626.3 L3153.1,1627.4 L3156.1,1628.5 L3159.1,1629.7 L3162.0,1630.9 L3164.9,1632.3 L3167.7,1633.7 L3170.5,1635.2Z M3293.2,1894.2 L3296.4,1896.5 L3296.5,1903.0 L3296.4,1909.5 L3294.5,1907.3 L3293.9,1900.8Z M3203.4,2051.7 L3203.7,2055.4 L3204.0,2059.1 L3204.1,2062.7 L3201.6,2067.3 L3199.0,2071.7 L3196.4,2076.1 L3193.7,2080.5 L3191.5,2084.1 L3189.2,2087.7 L3186.9,2091.3 L3184.5,2094.7 L3182.1,2098.1 L3174.3,2102.6 L3173.4,2100.0 L3172.3,2097.4 L3171.1,2094.7 L3172.7,2091.4 L3174.3,2088.1 L3175.8,2084.6 L3177.2,2081.2 L3178.6,2077.6 L3184.2,2073.7 L3189.6,2069.8 L3193.5,2064.6 L3197.3,2059.3Z M3032.1,1856.3 L3036.4,1856.4 L3040.6,1856.4 L3044.9,1856.4 L3043.3,1863.9 L3037.9,1861.9 L3032.6,1859.8Z M3019.4,1842.0 L3021.7,1843.5 L3020.9,1851.9 L3016.2,1852.9 L3015.5,1844.9Z M3020.3,1833.1 L3019.4,1841.0 L3017.2,1836.5Z M3078.3,1866.4 L3083.9,1866.4 L3089.4,1866.3 L3087.6,1868.1 L3082.9,1868.3 L3078.2,1868.4Z M3121.0,1858.5 L3116.4,1864.7 L3113.4,1863.9 L3115.6,1861.3Z M3312.1,1872.2 L3312.8,1871.6 L3313.3,1870.9 L3313.7,1870.3 L3314.1,1871.3 L3314.3,1872.3 L3314.3,1873.3 L3314.4,1875.1 L3314.4,1877.0 L3314.5,1878.8 L3314.5,1880.6 L3314.5,1886.1 L3314.4,1891.6 L3314.3,1893.5 L3314.2,1895.3 L3314.3,1893.5 L3314.4,1891.8 L3314.4,1890.1 L3314.5,1888.2 L3314.4,1886.4 L3314.3,1884.6 L3313.9,1882.8 L3313.5,1879.3 L3312.9,1875.8Z M3268.4,1727.9 L3271.1,1732.1 L3273.7,1736.4 L3276.3,1740.8 L3274.1,1737.1Z M3292.0,1773.1 L3296.1,1783.1 L3294.6,1780.2Z M2734.0,1854.1 L2734.1,1849.0 L2734.4,1843.9 L2734.6,1840.3 L2734.9,1836.7 L2735.3,1833.1 L2736.4,1828.0 L2737.5,1823.0 L2738.5,1819.4 L2739.7,1815.7 L2740.9,1812.2 L2742.0,1806.5 L2743.3,1800.8 L2745.0,1795.0 L2746.9,1789.2 L2748.5,1785.6 L2750.3,1782.0 L2752.2,1778.5 L2753.2,1774.7 L2754.3,1770.8 L2752.4,1774.5 L2753.2,1772.1 L2754.1,1769.7 L2755.2,1767.4 L2756.2,1765.0 L2757.3,1762.6 L2759.8,1757.4 L2762.5,1752.2 L2765.2,1747.2 L2767.2,1743.4 L2769.4,1739.7 L2771.6,1736.0 L2776.0,1729.1 L2776.1,1729.6 L2776.3,1730.1 L2774.9,1732.9 L2773.7,1735.7 L2772.5,1738.5 L2771.4,1741.4 L2770.4,1744.2 L2773.1,1742.2 L2772.1,1745.4 L2771.1,1748.6 L2770.1,1752.6 L2767.2,1758.4 L2764.5,1764.3 L2761.2,1771.1 L2758.1,1778.0 L2759.6,1777.8 L2762.6,1772.3 L2765.7,1766.9 L2770.5,1758.0 L2774.9,1753.1 L2777.1,1752.6 L2778.8,1753.0 L2780.6,1753.4 L2782.6,1753.7 L2784.6,1754.1 L2789.9,1746.6 L2795.8,1742.3 L2801.7,1738.9 L2803.1,1740.0 L2804.7,1741.1 L2807.8,1742.9 L2809.5,1738.5 L2814.5,1735.7 L2816.3,1736.4 L2818.3,1737.2 L2820.5,1737.8 L2822.8,1738.4 L2817.9,1743.3 L2820.5,1744.3 L2823.2,1745.4 L2826.8,1744.7 L2830.5,1744.1 L2834.3,1743.4 L2835.2,1738.7 L2836.2,1734.2 L2837.4,1729.7 L2837.1,1727.2 L2836.8,1724.7 L2836.6,1722.3 L2840.8,1721.3 L2842.2,1722.6 L2843.6,1723.9 L2845.1,1725.2 L2846.7,1726.4 L2848.3,1727.7 L2849.9,1728.9 L2851.6,1730.1 L2853.4,1731.2 L2855.2,1732.4 L2859.5,1729.7 L2863.8,1727.1 L2864.7,1723.4 L2865.7,1719.7 L2866.9,1716.1 L2868.1,1712.6 L2869.5,1709.1 L2874.0,1703.9 L2878.7,1698.9 L2883.6,1694.1 L2880.2,1694.5 L2876.9,1694.8 L2873.5,1695.1 L2878.2,1690.1 L2883.1,1685.3 L2884.3,1683.1 L2885.6,1680.9 L2887.0,1678.8 L2888.4,1676.7 L2887.6,1675.7 L2886.9,1674.7 L2886.2,1673.7 L2885.5,1672.7 L2880.3,1674.9 L2875.1,1677.2 L2870.0,1679.6 L2865.0,1682.7 L2860.0,1686.0 L2855.2,1689.4 L2849.9,1691.6 L2844.6,1693.7 L2839.5,1695.9 L2842.1,1692.1 L2844.8,1688.4 L2848.7,1684.3 L2852.6,1680.3 L2856.6,1676.4 L2858.2,1674.1 L2859.8,1671.8 L2861.5,1669.6 L2863.3,1667.4 L2865.1,1665.2 L2866.9,1663.1 L2871.5,1659.7 L2876.1,1656.4 L2880.7,1654.7 L2885.4,1653.1 L2888.4,1653.4 L2891.4,1653.7 L2894.6,1653.9 L2895.6,1654.8 L2896.7,1655.7 L2897.9,1656.6 L2902.2,1656.0 L2906.7,1655.4 L2910.0,1655.4 L2913.4,1655.3 L2913.9,1654.2 L2914.5,1653.1 L2915.1,1652.0 L2915.7,1650.9 L2916.4,1649.8 L2917.1,1648.7 L2920.4,1647.1 L2923.6,1645.5 L2926.9,1644.1 L2930.3,1642.7 L2928.3,1642.2 L2926.5,1641.7 L2924.7,1641.1 L2923.0,1640.6 L2921.3,1640.0 L2919.7,1639.4 L2920.4,1638.4 L2921.1,1637.5 L2921.8,1636.5 L2922.6,1635.6 L2923.4,1634.6 L2924.2,1633.7 L2925.0,1632.8 L2925.9,1631.9 L2926.8,1631.0 L2927.8,1630.1 L2928.6,1629.2 L2929.4,1628.4 L2930.3,1627.5 L2931.2,1626.7 L2932.1,1625.8 L2934.1,1625.0 L2936.0,1624.1 L2937.9,1623.3 L2939.9,1622.6 L2941.8,1621.8 L2943.8,1621.1 L2945.8,1620.4 L2947.7,1619.8 L2948.9,1619.1 L2950.1,1618.4 L2951.3,1617.7 L2952.5,1617.0 L2953.8,1616.4 L2955.1,1615.7 L2956.4,1615.1 L2957.7,1614.5 L2959.1,1613.9 L2960.4,1613.3 L2961.8,1612.7 L2963.5,1612.2 L2965.2,1611.7 L2966.9,1611.2 L2968.6,1610.7 L2970.3,1610.3 L2972.0,1609.9 L2973.7,1609.5 L2975.4,1609.1 L2977.2,1608.7 L2979.0,1608.4 L2980.9,1608.0 L2982.8,1607.7 L2984.6,1607.4 L2986.5,1607.1 L2988.3,1606.9 L2990.2,1606.7 L2992.0,1606.5 L2993.9,1606.3 L2995.7,1606.1 L2997.5,1606.0 L2999.3,1605.8 L3001.1,1605.7 L3002.7,1605.2 L3004.3,1604.7 L3006.0,1604.2 L3007.7,1603.8 L3009.5,1603.3 L3011.1,1602.7 L3012.8,1602.2 L3014.6,1601.7 L3016.5,1601.2 L3014.4,1600.9 L3012.2,1600.7 L3010.0,1600.5 L3007.7,1600.3 L3009.8,1599.9 L3011.9,1599.6 L3014.0,1599.3 L3016.3,1599.0 L3018.5,1598.8 L3015.5,1598.4 L3012.4,1598.2 L3011.6,1597.6 L3010.7,1597.1 L3007.9,1596.7 L3004.8,1596.5 L3001.6,1596.5 L2998.9,1596.7 L2996.3,1596.9 L2993.7,1597.1 L2991.0,1597.4 L2988.4,1597.7 L2990.4,1597.4 L2992.5,1597.1 L2994.8,1596.8 L2997.1,1596.6 L2999.5,1596.4 L3002.1,1596.2 L2999.3,1596.4 L2996.7,1596.6 L2994.0,1596.9 L2991.4,1597.1 L2988.9,1597.4 L2986.4,1597.7 L2984.0,1598.0 L2981.6,1598.4 L2979.3,1598.8 L2977.8,1599.2 L2976.5,1599.6 L2975.4,1600.2 L2974.4,1600.8 L2971.6,1601.2 L2968.8,1601.7 L2966.0,1602.1 L2963.1,1602.7 L2960.5,1603.3 L2957.9,1603.9 L2955.4,1604.5 L2952.8,1605.2 L2950.3,1605.9 L2947.7,1606.6 L2944.8,1607.4 L2941.9,1608.2 L2939.0,1609.1 L2936.1,1610.0 L2933.2,1611.0 L2927.1,1612.6 L2920.9,1614.4 L2914.6,1616.5 L2910.3,1618.2 L2905.9,1619.9 L2901.5,1621.8 L2897.1,1623.8 L2892.6,1625.8 L2888.2,1628.0 L2883.7,1630.3 L2877.1,1633.7 L2875.2,1634.8 L2873.4,1635.8 L2871.6,1636.9 L2869.9,1637.9 L2866.2,1640.2 L2862.5,1642.5 L2858.7,1645.0 L2855.0,1647.5 L2851.3,1650.1 L2846.3,1653.8 L2841.3,1657.6 L2836.4,1661.5 L2831.5,1665.6 L2827.0,1669.4 L2822.6,1673.4 L2818.2,1677.6 L2813.9,1681.8 L2809.7,1686.2 L2805.5,1690.7 L2801.4,1695.2 L2797.3,1700.0 L2793.4,1704.8 L2789.5,1709.7 L2785.7,1714.7 L2783.8,1717.4 L2781.9,1720.1 L2780.1,1722.7 L2776.0,1728.9 L2772.0,1735.2 L2768.3,1741.6 L2764.6,1748.1 L2761.2,1754.7 L2757.9,1761.5 L2756.0,1765.5 L2754.2,1769.6 L2752.4,1773.7 L2750.7,1777.8 L2749.1,1781.9 L2747.6,1786.1 L2746.1,1790.2 L2744.7,1794.3 L2742.9,1800.2 L2741.2,1806.0 L2739.6,1811.9 L2738.1,1817.8 L2736.8,1823.8 L2735.6,1829.7 L2735.0,1833.7 L2734.4,1837.6 L2734.0,1841.5 L2733.6,1845.5 L2733.3,1849.4 L2733.6,1851.8Z M2889.0,1688.1 L2895.5,1686.4 L2902.0,1684.5 L2907.2,1683.0 L2912.5,1681.4 L2913.9,1679.1 L2915.4,1676.9 L2917.0,1674.7 L2918.7,1672.5 L2922.8,1669.3 L2927.0,1666.1 L2928.4,1664.4 L2929.9,1662.8 L2931.4,1661.2 L2932.9,1659.6 L2933.8,1658.4 L2934.7,1657.3 L2935.6,1656.1 L2936.5,1655.0 L2937.5,1653.9 L2938.5,1652.9 L2939.6,1651.8 L2938.4,1651.3 L2937.2,1650.8 L2936.0,1650.3 L2934.9,1649.8 L2933.8,1649.2 L2932.8,1648.6 L2929.4,1650.2 L2926.1,1651.9 L2922.8,1653.6 L2920.3,1655.2 L2917.9,1656.9 L2915.5,1658.7 L2913.5,1660.3 L2911.6,1662.0 L2909.7,1663.8 L2907.9,1665.6 L2906.1,1667.5 L2904.4,1669.4 L2899.7,1670.8 L2895.0,1672.3 L2893.5,1674.3 L2892.1,1676.3 L2890.7,1678.3 L2889.3,1680.4 L2889.2,1682.0 L2889.1,1683.5 L2889.0,1685.0 L2889.0,1686.6Z M2954.3,1648.5 L2956.3,1648.8 L2958.3,1649.0 L2960.4,1649.2 L2962.4,1649.3 L2964.5,1649.4 L2966.3,1649.6 L2968.0,1649.8 L2969.8,1649.9 L2971.6,1650.0 L2973.4,1650.1 L2975.2,1650.1 L2976.8,1650.2 L2978.3,1650.3 L2979.9,1650.3 L2981.5,1650.3 L2983.1,1650.3 L2984.7,1650.3 L2986.3,1650.3 L2986.2,1649.9 L2986.2,1649.5 L2986.2,1649.1 L2986.3,1648.7 L2986.3,1648.3 L2986.4,1647.9 L2986.4,1647.6 L2986.5,1647.2 L2986.6,1646.8 L2986.7,1646.4 L2986.8,1646.1 L2986.9,1645.7 L2987.0,1645.3 L2986.3,1645.1 L2985.6,1644.9 L2984.9,1644.6 L2984.2,1644.3 L2983.5,1644.0 L2982.9,1643.7 L2982.2,1643.4 L2981.6,1643.1 L2981.0,1642.8 L2980.3,1642.5 L2979.7,1642.1 L2979.2,1641.7 L2978.6,1641.4 L2978.0,1641.0 L2977.5,1640.6 L2970.3,1640.5 L2963.9,1641.4 L2957.6,1642.6 L2957.2,1643.2 L2956.8,1643.8 L2956.4,1644.5 L2956.0,1645.2 L2955.6,1645.8 L2955.3,1646.5 L2954.9,1647.2 L2954.6,1647.9Z M2946.9,1650.1 L2954.3,1647.9 L2954.4,1647.3 L2954.4,1646.6 L2954.5,1646.0 L2954.6,1645.4 L2954.7,1644.7 L2954.8,1644.1 L2955.0,1643.5 L2955.2,1642.8 L2955.4,1642.2 L2955.6,1641.6 L2955.8,1640.9 L2948.9,1641.0 L2948.6,1641.7 L2948.3,1642.4 L2948.1,1643.1 L2947.9,1643.8 L2947.7,1644.5 L2947.5,1645.2 L2947.3,1645.9 L2947.2,1646.6 L2947.1,1647.3 L2947.0,1648.0 L2947.0,1648.7 L2946.9,1649.4Z M2924.8,1637.8 L2930.5,1636.3 L2936.1,1635.0 L2941.7,1633.9 L2947.3,1633.0 L2947.7,1632.3 L2948.1,1631.6 L2948.6,1630.9 L2949.0,1630.2 L2949.5,1629.5 L2950.0,1628.9 L2950.6,1628.2 L2951.1,1627.5 L2951.7,1626.8 L2950.6,1626.0 L2949.5,1625.2 L2948.5,1624.4 L2947.6,1623.6 L2942.7,1624.2 L2937.8,1624.9 L2936.8,1625.7 L2935.7,1626.5 L2934.7,1627.3 L2933.8,1628.2 L2932.8,1629.0 L2931.9,1629.8 L2931.0,1630.7 L2930.1,1631.6 L2929.3,1632.4 L2928.4,1633.3 L2927.7,1634.2 L2926.9,1635.1 L2926.2,1636.0 L2925.5,1636.9Z M2948.5,1624.4 L2952.4,1624.0 L2956.2,1623.6 L2959.9,1623.4 L2963.6,1623.2 L2964.1,1622.6 L2964.5,1621.9 L2965.0,1621.3 L2965.6,1620.7 L2961.5,1619.8 L2957.6,1618.9 L2956.3,1619.6 L2955.2,1620.2 L2954.0,1620.9 L2952.8,1621.6 L2951.7,1622.3 L2950.6,1623.0 L2949.6,1623.7Z M2934.6,1642.8 L2939.0,1642.9 L2943.5,1643.0 L2943.8,1642.2 L2944.1,1641.5 L2944.4,1640.8 L2944.8,1640.1 L2945.1,1639.3 L2945.5,1638.6 L2946.0,1637.9 L2946.4,1637.2 L2946.9,1636.5 L2942.5,1636.4 L2938.3,1636.3 L2937.7,1637.1 L2937.2,1637.9 L2936.7,1638.7 L2936.2,1639.5 L2935.8,1640.3 L2935.3,1641.2 L2934.9,1642.0Z M2892.2,1667.2 L2895.3,1664.8 L2898.4,1662.4 L2901.6,1660.2 L2901.1,1659.3 L2900.7,1658.3 L2900.3,1657.4 L2900.0,1656.4 L2892.9,1659.9 L2892.7,1661.1 L2892.5,1662.3 L2892.4,1663.6 L2892.3,1664.8 L2892.2,1666.0Z M2951.8,1633.0 L2956.2,1633.0 L2960.7,1633.1 L2961.0,1632.5 L2961.4,1631.9 L2961.8,1631.4 L2962.2,1630.8 L2962.6,1630.2 L2963.0,1629.6 L2963.5,1629.1 L2963.9,1628.5 L2964.4,1627.9 L2965.0,1627.4 L2965.5,1626.8 L2966.1,1626.2 L2959.4,1626.1 L2958.6,1626.7 L2957.8,1627.3 L2957.1,1627.9 L2956.3,1628.5 L2955.6,1629.1 L2954.9,1629.7 L2954.3,1630.4 L2953.6,1631.0 L2953.0,1631.7 L2952.4,1632.3Z M2838.3,1742.3 L2846.1,1736.9 L2849.8,1736.1 L2853.6,1735.3 L2857.5,1734.4 L2855.0,1739.6 L2852.8,1745.0 L2847.5,1753.4 L2842.9,1755.8 L2841.7,1753.0 L2840.6,1750.1 L2839.7,1747.5 L2839.0,1744.9Z M2754.3,1782.0 L2753.3,1781.5 L2752.4,1781.0 L2751.5,1784.8 L2750.7,1788.5 L2750.0,1792.2 L2749.4,1796.0 L2748.9,1799.8 L2748.5,1803.6 L2748.2,1807.4 L2748.5,1810.0 L2749.0,1812.7 L2749.5,1815.4 L2750.9,1806.0 L2751.4,1801.3 L2752.0,1796.6 L2752.7,1792.0 L2753.5,1787.0Z M2750.1,1819.4 L2746.4,1822.2 L2746.9,1825.4 L2747.5,1828.6 L2748.2,1831.8 L2749.6,1834.3 L2751.1,1836.8 L2752.1,1826.5 L2751.0,1822.9Z M2734.1,1855.5 L2735.5,1853.2 L2737.0,1850.9 L2738.0,1851.7 L2739.1,1852.5 L2740.3,1853.3 L2739.0,1859.7 L2741.2,1859.5 L2741.7,1864.1 L2742.2,1868.7 L2742.8,1873.3 L2744.0,1875.8 L2745.3,1878.3 L2746.7,1880.8 L2748.1,1883.3 L2749.6,1885.8 L2749.9,1892.2 L2750.3,1898.6 L2751.7,1905.4 L2753.3,1912.2 L2755.2,1916.2 L2757.2,1920.1 L2759.3,1924.0 L2762.0,1929.5 L2764.9,1934.9 L2766.6,1939.0 L2767.2,1944.6 L2767.9,1950.2 L2768.7,1955.8 L2769.6,1961.3 L2773.6,1969.8 L2776.5,1973.6 L2779.4,1977.4 L2782.5,1981.1 L2785.6,1984.8 L2789.1,1988.3 L2792.8,1991.9 L2796.5,1995.3 L2800.3,1998.7 L2804.3,2002.1 L2808.2,2007.2 L2812.2,2012.2 L2816.4,2017.1 L2817.4,2022.0 L2818.4,2026.8 L2815.9,2029.8 L2813.6,2032.7 L2811.4,2035.6 L2809.4,2038.3 L2809.4,2043.9 L2809.7,2047.3 L2810.1,2050.7 L2810.6,2054.0 L2811.1,2057.3 L2811.8,2060.5 L2811.1,2063.3 L2810.7,2066.0 L2807.3,2063.6 L2804.9,2062.5 L2802.7,2061.5 L2800.6,2060.4 L2800.8,2062.8 L2801.3,2065.0 L2801.9,2067.2 L2802.8,2069.8 L2804.0,2072.2 L2804.1,2073.5 L2804.7,2074.5 L2805.7,2075.6 L2803.3,2072.9 L2801.0,2070.3 L2798.7,2067.6 L2802.1,2071.6 L2805.6,2075.5 L2809.2,2079.3 L2807.7,2077.7 L2806.2,2076.2 L2804.8,2074.6 L2803.5,2073.1 L2806.2,2076.2 L2809.1,2079.2 L2812.0,2082.3 L2813.4,2083.7 L2815.0,2085.3 L2816.8,2087.0 L2820.0,2090.1 L2823.3,2093.2 L2826.7,2096.3 L2830.2,2099.4 L2833.8,2102.4 L2838.3,2106.1 L2842.9,2109.7 L2847.5,2113.1 L2852.2,2116.5 L2849.0,2114.2 L2845.8,2111.9 L2842.7,2109.5 L2839.5,2107.1 L2836.4,2104.6 L2833.4,2102.0 L2829.6,2098.8 L2825.8,2095.5 L2822.1,2092.1 L2818.5,2088.7 L2815.0,2085.3 L2811.6,2081.8 L2808.2,2078.3 L2804.9,2074.7 L2801.9,2071.4 L2799.0,2068.0 L2796.2,2064.7 L2793.4,2061.3 L2790.7,2057.9 L2788.1,2054.4 L2785.6,2051.0 L2783.1,2047.6 L2781.1,2044.7 L2779.2,2041.9 L2777.3,2039.2 L2775.5,2036.4 L2773.3,2032.8 L2771.1,2029.3 L2769.0,2025.7 L2766.9,2022.1 L2765.0,2018.5 L2763.0,2014.9 L2761.2,2011.2 L2759.3,2007.6 L2757.6,2004.0 L2755.8,2000.1 L2754.1,1996.3 L2752.5,1992.4 L2750.9,1988.5 L2749.3,1984.6 L2746.7,1977.5 L2744.3,1970.4 L2742.1,1963.1 L2740.0,1955.8 L2738.2,1948.5 L2736.5,1941.0 L2735.4,1935.3 L2734.4,1929.6 L2733.5,1923.9 L2732.7,1918.1 L2732.0,1912.4 L2731.5,1906.6 L2731.1,1900.8 L2730.8,1896.5 L2730.7,1892.3 L2730.5,1888.1 L2730.5,1884.0 L2730.6,1879.9 L2730.9,1877.2 L2731.5,1874.5 L2731.9,1869.9 L2732.4,1865.3 L2733.0,1860.8 L2733.6,1856.2Z" fill="#cccccc" fill-rule="nonzero"/>
<path d="M3094.5,1836.0 L3087.2,1830.2 L3087.9,1826.6 L3089.6,1821.2 L3091.9,1815.8 L3093.5,1808.9 L3101.1,1813.4 L3105.4,1815.9 L3107.4,1816.5 L3110.8,1813.4 L3114.1,1810.2 L3108.2,1803.0 L3111.7,1801.8 L3115.0,1800.5 L3118.4,1799.2 L3117.0,1808.4 L3119.3,1811.9 L3127.3,1815.2 L3132.1,1819.0 L3136.9,1822.6 L3131.7,1827.5 L3127.7,1828.1 L3123.7,1828.7 L3119.7,1829.3 L3114.9,1827.0 L3111.5,1828.7 L3108.0,1830.3 L3104.4,1832.0 L3099.5,1834.0Z M3165.1,1818.2 L3166.4,1817.1 L3159.4,1813.3 L3152.5,1809.4 L3149.5,1803.1 L3146.4,1796.7 L3148.8,1794.0 L3151.0,1791.3 L3153.2,1788.5 L3155.2,1785.7 L3159.6,1786.9 L3158.8,1792.9 L3157.8,1798.9 L3161.8,1802.0 L3166.7,1805.5 L3171.6,1809.0 L3175.1,1815.7 L3178.6,1819.6 L3182.1,1823.5 L3184.7,1828.3 L3181.2,1829.5 L3177.7,1830.7 L3174.2,1831.8 L3170.6,1832.9 L3165.6,1827.3Z M3175.9,1776.5 L3182.7,1779.3 L3184.6,1787.2 L3182.1,1791.1 L3177.4,1785.7Z" fill="#ffffff"/>
<path d="M3087.3,1885.4 L3087.8,1889.1 L3088.2,1892.8 L3088.7,1896.4 L3089.1,1900.1 L3089.6,1903.8 L3090.0,1907.4 L3090.4,1911.1 L3090.8,1914.7 L3091.2,1918.4 L3091.5,1922.0 L3091.9,1925.7 L3092.2,1929.3 L3092.6,1932.9 L3095.8,1932.4 L3098.9,1932.0 L3102.1,1931.4 L3105.3,1930.9 L3108.4,1930.4 L3111.5,1929.8 L3114.7,1929.2 L3117.8,1928.6 L3120.8,1927.9 L3123.9,1927.3 L3127.0,1926.6 L3130.0,1925.9 L3133.1,1925.2 L3136.1,1924.5 L3139.1,1923.7 L3142.0,1922.9 L3145.0,1922.1 M3016.8,1862.9 L3016.2,1866.9 L3015.7,1870.9 L3015.1,1874.9 L3014.5,1878.9 L3014.0,1882.9 L3015.5,1886.5 L3017.1,1890.0 L3018.7,1893.5 L3020.3,1897.0 L3021.6,1900.8 L3022.9,1904.5 L3024.3,1908.2 L3025.7,1911.8 L3027.1,1915.5 L3028.1,1919.2 L3029.2,1923.0 L3030.3,1926.7 L3031.4,1930.4 L3035.0,1931.9 L3038.6,1933.5 L3042.3,1935.0 L3045.9,1932.4 L3049.5,1933.6 L3053.1,1934.9 L3056.6,1936.1 L3060.2,1937.3 L3063.8,1938.4 L3067.4,1939.5 L3071.0,1940.6 L3074.6,1941.7 L3078.2,1942.8 L3081.9,1943.8 L3085.5,1944.8 L3089.1,1945.7 L3090.3,1941.5 L3091.4,1937.2 L3092.6,1932.9 M2973.2,1870.2 L2973.5,1873.9 L2973.8,1877.6 L2974.1,1881.3 L2974.5,1885.0 L2971.1,1885.9 L2967.8,1886.9 L2964.5,1887.8 L2961.1,1888.6 L2957.8,1889.5 L2954.4,1890.3 L2951.1,1891.1 L2947.7,1891.9 L2944.4,1892.6 L2941.0,1893.4 L2940.4,1897.0 L2939.9,1900.6 L2939.3,1904.2 L2942.0,1907.1 L2944.7,1910.0 L2947.5,1912.9 L2950.3,1915.8 L2953.2,1918.6 L2956.1,1921.4 L2959.0,1924.2 L2962.0,1927.0 L2965.0,1929.8 L2968.1,1932.5 L2971.1,1935.3 L2974.3,1937.9 L2977.4,1940.6 L2980.6,1943.3 L2983.8,1945.9 L2987.0,1948.5 L2990.3,1951.1 L2993.8,1949.5 L2997.3,1947.9 L3000.8,1946.2 L3004.2,1944.6 L3007.7,1942.9 L3011.1,1941.2 L3014.5,1939.4 L3017.9,1937.7 L3021.3,1935.9 L3024.7,1934.1 L3028.0,1932.2 L3031.4,1930.4 M2920.7,1898.3 L2923.8,1899.0 L2926.9,1899.7 L2930.1,1900.4 L2933.2,1901.0 L2936.4,1901.6 L2939.6,1902.2 M2939.3,1904.2 L2938.4,1910.6 L2934.8,1909.9 L2931.2,1909.3 L2927.7,1908.5 L2924.2,1907.8 L2922.8,1911.5 L2921.5,1915.1 L2920.1,1918.8 L2918.8,1922.4 L2917.5,1926.1 L2916.2,1929.7 L2912.8,1928.9 L2909.4,1928.1 L2906.1,1927.3 L2902.7,1926.4 L2899.4,1925.5 M2954.9,1918.3 L2954.3,1921.9 L2953.6,1925.4 L2953.0,1929.0 L2952.4,1932.5 L2951.8,1936.1 L2951.2,1939.6 L2950.6,1943.1 L2950.0,1946.6 L2949.5,1950.1 L2948.9,1953.6 L2948.4,1957.1 L2947.8,1960.5 L2947.3,1964.0 L2943.8,1963.4 L2940.2,1962.9 L2936.7,1962.3 L2933.2,1961.7 L2929.7,1961.0 L2926.3,1960.4 L2922.8,1959.7 L2919.4,1959.0 L2915.8,1961.6 L2912.7,1959.5 L2909.6,1957.4 L2906.6,1955.3 L2903.5,1953.2 L2900.5,1951.0 L2897.6,1948.9 M2990.3,1951.1 L2990.5,1954.6 L2990.6,1958.1 L2990.8,1961.6 L2991.0,1965.0 L2991.1,1968.5 L2987.0,1969.0 L2982.8,1969.4 L2978.6,1969.8 L2974.5,1970.1 L2970.8,1972.0 L2967.1,1973.8 L2963.5,1975.6 L2959.7,1978.2 L2955.9,1980.6 L2952.1,1983.1 L2948.3,1985.5 L2946.2,1988.9 L2942.6,1987.4 L2939.1,1985.9 L2935.5,1984.4 L2932.0,1982.8 L2928.6,1980.5 L2925.2,1978.0 L2921.8,1975.6 L2918.5,1973.1 M3045.9,1932.4 L3047.1,1936.0 L3048.3,1939.7 L3049.5,1943.3 L3050.7,1946.9 L3049.6,1950.4 L3048.5,1954.0 L3047.4,1957.5 L3046.2,1961.0 L3045.1,1964.4 L3043.9,1967.9 L3042.7,1971.3 L3041.5,1974.8 L3040.3,1978.2 L3036.3,1978.9 L3032.2,1979.5 L3028.2,1980.2 L3024.1,1980.8 L3020.0,1981.3 L3016.5,1980.5 L3013.1,1979.7 L3009.6,1978.9 L3006.2,1978.1 L3002.7,1977.2 L2998.7,1978.3 L2994.8,1979.3 L2990.8,1980.4 L2990.6,1986.5 L2989.9,1990.0 L2989.2,1993.4 L2988.5,1996.9 L2987.7,2000.3 L2987.0,2003.7 L2986.3,2007.1 L2985.6,2010.5 M3089.1,1945.7 L3088.6,1949.5 L3088.0,1953.3 L3087.4,1957.1 L3086.8,1960.8 L3086.2,1964.6 L3086.3,1968.4 L3086.4,1972.2 L3086.4,1976.0 L3086.5,1979.8 L3086.5,1983.5 L3086.5,1987.3 L3085.7,1991.8 L3084.9,1996.3 L3081.1,1997.8 L3077.3,1999.3 L3073.5,2000.8 L3069.6,2002.2 L3065.8,2003.7 L3061.9,2004.3 L3058.0,2004.9 L3054.1,2005.5 L3050.2,2006.1 L3049.5,2002.5 L3048.7,1999.0 L3047.9,1995.4 L3047.2,1991.8 L3046.4,1988.2 L3045.6,1984.5 L3044.8,1980.9 M3014.9,2020.1 L3018.5,2016.7 L3022.1,2013.2 L3025.8,2009.7 L3029.4,2006.1 L3032.9,2002.4 L3036.5,1998.8 L3040.1,1995.0 L3041.3,1991.5 L3042.5,1988.0 L3043.6,1984.4 L3044.8,1980.9 M3021.5,2030.2 L3025.4,2030.2 L3029.4,2030.2 L3033.3,2030.1 L3037.3,2030.0 L3041.2,2029.9 L3045.1,2029.7 L3049.1,2029.6 L3053.0,2029.4 L3057.2,2026.5 L3061.4,2023.6 L3065.6,2020.7 L3069.3,2020.0 L3073.1,2019.3 L3076.8,2018.5 L3080.5,2017.8 L3084.3,2017.0 L3088.0,2016.2 L3091.7,2015.3 L3095.4,2014.5 L3099.0,2013.6 L3102.7,2012.7 L3106.3,2011.7 L3110.0,2010.8 L3113.4,2010.9 L3116.8,2011.0 L3120.1,2011.1 L3123.5,2011.1 L3126.9,2011.1 L3130.8,2011.3 L3134.8,2011.5 L3138.7,2011.6 L3142.2,2008.6 L3145.7,2005.5 L3149.1,2002.4 M3084.9,1996.3 L3088.3,1994.5 L3091.7,1992.7 L3095.0,1990.8 L3098.3,1988.9 L3101.6,1987.1 L3105.3,1987.6 L3109.0,1988.2 L3112.6,1988.7 L3116.3,1989.2 L3119.9,1986.2 L3123.5,1983.2 L3127.1,1980.1 L3130.6,1977.0 L3134.1,1973.9 L3136.1,1977.5 L3138.1,1981.1 L3140.1,1984.6 L3141.4,1980.7 L3142.7,1976.8 L3143.9,1972.9 L3145.1,1968.9 L3146.3,1964.9 L3147.4,1960.9 L3148.5,1956.9 M3033.2,2059.9 L3036.9,2060.5 L3040.6,2061.0 L3044.3,2061.5 L3048.0,2062.0 L3051.7,2062.5 L3055.4,2062.9 L3059.1,2063.3 L3062.9,2063.7 L3066.6,2064.1 L3070.4,2064.4 L3074.1,2064.7 L3077.8,2064.9 L3079.2,2067.8 L3080.6,2070.6 L3081.9,2073.3 L3083.2,2076.0 L3084.6,2078.7 L3088.2,2078.4 L3091.8,2078.1 L3095.3,2078.6 L3098.7,2079.0 L3102.1,2079.3 L3105.5,2079.7 L3108.9,2080.0 L3112.2,2080.3 L3115.6,2080.6 L3118.9,2080.8 L3118.0,2078.5 L3117.1,2076.1 L3116.2,2073.7 L3115.3,2071.3 L3114.4,2068.8 L3115.0,2066.1 L3115.7,2063.3 L3116.3,2060.6 L3116.9,2057.8 L3117.5,2055.0 L3118.1,2052.1 L3118.7,2049.2 L3119.1,2046.4 L3119.4,2043.5 L3119.8,2040.6 L3120.1,2037.7 L3120.4,2034.7 L3122.1,2030.8 L3123.8,2026.9 L3125.4,2022.9 L3127.1,2019.0 L3127.0,2015.1 L3126.9,2011.1 M3149.6,2004.1 L3153.0,2003.6 L3156.4,2003.0 L3159.7,2002.5 L3163.0,2001.9 L3166.3,2001.3 L3169.6,2000.7 L3172.8,2000.0 L3176.0,1999.4 L3179.2,1996.0 L3182.3,1992.7 L3185.4,1989.2 L3188.5,1985.8 L3191.5,1982.4 L3194.4,1978.9 L3197.3,1975.3 L3200.1,1971.8 M3176.4,1998.8 L3176.4,2001.9 L3176.3,2005.1 L3176.2,2008.2 L3176.1,2011.3 L3176.0,2014.4 L3175.8,2017.4 L3175.6,2020.4 L3175.4,2023.5 M3141.2,2030.2 L3144.7,2031.6 L3148.1,2032.9 L3151.4,2034.2 L3154.7,2035.4 L3158.0,2036.7 L3161.3,2037.8 L3164.5,2039.0 M3120.4,2034.7 L3123.9,2034.0 L3127.4,2033.3 L3130.9,2032.6 L3134.4,2031.8 L3137.8,2031.0 L3141.2,2030.2 L3144.6,2027.6 L3147.8,2024.9 L3151.1,2022.2 L3154.3,2019.4 L3157.5,2016.6 L3160.7,2013.8 L3163.8,2011.0 L3166.9,2008.1 L3170.0,2005.2 L3173.0,2002.3 L3176.0,1999.4 M3030.8,2104.5 L3034.3,2104.4 L3037.9,2104.3 L3041.5,2104.2 L3045.0,2104.0 L3048.6,2103.9 L3052.1,2103.7 L3055.7,2103.5 L3059.2,2103.2 L3062.7,2103.0 L3066.2,2102.7 L3069.8,2102.4 L3073.3,2102.0 L3076.6,2102.1 L3079.9,2102.1 L3083.2,2102.1 L3086.4,2102.1 L3089.7,2102.0 L3094.5,2100.7 L3098.2,2099.2 L3101.9,2097.6 L3105.7,2096.0 L3109.4,2094.3 L3113.1,2092.7 L3116.8,2090.9 L3120.5,2089.2 L3124.2,2085.8 L3127.9,2082.4 L3131.6,2078.8 L3135.2,2075.3 L3138.8,2071.6 L3142.1,2070.4 L3145.4,2069.1 L3148.7,2067.9 L3151.9,2066.6 L3155.1,2065.2 L3158.3,2063.9 L3161.5,2062.5 L3164.6,2061.1 L3167.8,2059.7 M3051.5,2135.0 L3054.6,2134.8 L3057.8,2134.5 L3060.9,2134.2 L3064.0,2133.9 L3067.1,2133.6 L3067.4,2131.8 L3067.7,2129.9 L3068.0,2128.0 L3068.3,2126.1 L3068.5,2124.1 L3068.8,2122.2 L3069.0,2120.3 L3069.3,2118.3 L3069.5,2116.3 L3070.7,2113.9 L3071.9,2111.4 L3073.1,2108.9 L3074.3,2106.3 L3075.5,2103.7 M3068.5,2124.7 L3071.8,2123.8 L3075.2,2122.8 L3078.6,2121.9 L3082.0,2120.9 L3085.3,2119.9 L3088.7,2118.8 L3092.1,2117.8 L3095.5,2116.7 L3098.8,2115.6 L3102.2,2114.4 L3105.6,2113.3 L3108.9,2112.1 L3112.3,2110.8 L3116.5,2110.0 L3120.7,2109.2 L3121.3,2111.2 L3121.9,2113.1 L3122.5,2115.0 L3123.0,2116.9 L3123.5,2118.7 L3123.9,2120.5 M3120.5,2089.2 L3120.6,2091.6 L3120.7,2093.9 L3120.8,2096.2 L3120.8,2098.4 L3120.8,2100.6 L3120.8,2102.8 L3120.8,2105.0 L3120.8,2107.1 L3120.7,2109.2 M2956.6,2013.5 L2956.8,2010.4 L2957.0,2007.3 L2957.2,2004.1 L2957.4,2001.0 L2957.7,1997.8 L2957.9,1994.6 L2958.2,1991.4 L2958.4,1988.2 M2978.1,2011.2 L2977.9,2008.0 L2977.8,2004.8 L2977.6,2001.5 L2977.5,1998.2 L2977.4,1994.9 L2977.3,1991.6 L2977.2,1988.3 M2934.5,2010.7 L2934.0,2007.5 L2933.4,2004.2 L2932.9,2001.0 L2932.3,1997.7 L2931.8,1994.4 L2927.7,1991.3 L2923.5,1988.2 L2919.4,1985.1 M2918.5,1973.1 L2914.9,1972.7 L2911.4,1972.2 L2907.8,1971.7 L2909.2,1975.4 L2910.6,1979.1 L2912.0,1982.8 L2913.5,1986.5 L2915.0,1990.1 L2916.5,1993.7 M2979.1,1828.7 L2981.6,1829.6 L2984.1,1830.5 L2986.7,1831.4 L2989.2,1832.2 L2991.8,1833.1 L2994.4,1833.9 L2997.0,1834.7 M2960.9,1833.2 L2959.5,1837.1 L2958.2,1840.9 L2956.9,1844.7 L2955.6,1848.6 L2954.3,1852.4 L2952.9,1856.2 M3010.6,1801.1 L3013.5,1802.4 L3016.5,1803.7 L3014.3,1810.4 L3011.5,1813.8 L3008.8,1817.1 L3011.4,1822.6 L3013.3,1829.0 M3062.2,1775.6 L3063.0,1778.9 L3063.7,1782.3 L3064.5,1785.7 L3065.2,1789.0 L3067.5,1794.1 L3064.3,1801.3 L3061.7,1801.1 L3059.1,1800.9 L3056.5,1800.7 L3053.9,1800.4 L3051.3,1799.4 L3048.7,1798.4 L3046.1,1797.4 L3043.6,1796.4 L3041.0,1795.3 L3038.6,1794.3 M3045.9,1804.0 L3045.7,1807.7 L3045.5,1811.4 L3045.3,1815.2 L3042.8,1815.3 L3040.4,1815.5 L3037.9,1815.6 L3035.5,1815.7 L3032.5,1815.2 L3029.6,1814.6 L3026.6,1814.1 L3023.7,1813.5 L3020.8,1813.0 M3066.0,1805.5 L3063.7,1809.0 L3061.2,1812.6 L3058.7,1816.1 L3056.2,1816.6 L3053.8,1817.0 L3051.3,1817.5 L3048.8,1817.9 L3046.3,1818.3 L3043.8,1818.7 L3046.4,1820.3 L3049.1,1821.9 L3051.7,1823.5 L3054.4,1825.1 L3057.2,1826.6 L3060.0,1828.2 L3062.9,1829.8 L3065.8,1831.3 L3068.7,1832.9 L3071.2,1839.1 L3074.1,1838.1 L3076.9,1837.1 L3079.8,1836.0 L3082.6,1835.0 M3078.4,1804.7 L3081.1,1808.2 L3083.7,1811.8 L3086.4,1815.3 M3063.5,1804.3 L3066.1,1804.6 L3068.7,1804.8 L3071.3,1805.1 L3073.9,1805.3 L3076.6,1805.5 L3079.6,1803.8 L3082.5,1802.0 L3086.9,1806.0 L3091.4,1809.9 M3068.5,1824.4 L3071.2,1824.4 L3073.9,1824.3 L3076.5,1824.3 L3079.2,1824.2 L3081.9,1824.1 L3084.5,1824.0 L3087.2,1823.9 L3089.8,1823.7 M3069.7,1759.9 L3069.6,1764.1 L3069.5,1768.4 L3067.9,1770.8 L3066.2,1773.1 L3064.5,1775.5 L3062.7,1777.9 M3068.4,1751.3 L3069.1,1755.6 L3069.7,1759.9 M3061.2,1758.9 L3059.8,1760.7 L3058.3,1762.6 L3056.7,1764.4 L3055.1,1766.3 L3053.5,1768.1 M3056.4,1711.0 L3057.3,1713.8 L3058.2,1716.7 L3059.1,1719.5 L3059.9,1722.4 L3060.8,1725.4 L3061.6,1728.3 L3062.4,1731.3 L3063.2,1734.3 L3064.0,1737.4 L3064.7,1740.4 L3065.5,1743.5 L3066.2,1746.6 M3041.6,1713.1 L3040.7,1715.0 L3039.7,1717.0 L3038.7,1719.0 L3037.6,1721.0 L3036.5,1723.0 L3035.3,1725.0 L3034.1,1727.0 L3032.8,1729.0 L3031.4,1731.0 L3030.0,1733.0 L3028.6,1735.0 L3027.0,1737.0 L3027.0,1740.3 L3026.9,1743.6 L3026.8,1746.9 L3026.7,1750.2 L3026.6,1753.6 L3026.4,1756.9 M3042.7,1715.0 L3044.8,1717.4 L3046.8,1719.8 L3049.0,1722.1 L3051.2,1724.5 M3088.8,1781.1 L3091.5,1782.3 L3094.2,1783.5 L3096.9,1784.6 L3099.7,1785.7 L3102.5,1786.8 L3104.9,1787.0 L3107.4,1787.2 L3109.9,1787.4 L3112.4,1787.5 L3114.8,1787.6 L3117.3,1787.7 L3116.7,1793.0 L3116.0,1798.4 M3073.5,1766.3 L3076.4,1768.6 L3079.3,1770.9 L3082.3,1773.2 L3085.3,1775.5 L3088.3,1777.8 L3088.8,1781.1 L3086.8,1781.9 L3084.7,1782.7 L3082.6,1783.5 L3080.5,1784.2 L3078.3,1784.9 L3076.2,1785.7 L3074.0,1786.4 L3071.9,1787.1 L3069.7,1787.7 L3067.5,1788.4 L3065.2,1789.0 M3143.2,1821.0 L3147.1,1824.9 L3151.1,1828.8 L3152.4,1832.3 L3153.8,1835.7 L3155.1,1839.2 L3157.5,1842.4 L3160.0,1845.5 L3162.4,1848.7 L3165.8,1851.9 L3169.1,1855.1 L3172.4,1858.2 L3174.9,1861.7 L3177.4,1865.1 L3179.9,1868.6 M3132.7,1827.2 L3134.8,1826.0 L3137.0,1824.7 L3139.1,1823.5 L3141.2,1822.3 L3143.2,1821.0 L3145.5,1820.5 L3147.9,1820.0 L3150.2,1819.4 L3152.4,1818.9 L3154.7,1818.3 L3152.1,1818.1 L3149.5,1817.8 L3146.9,1817.6 L3144.2,1817.3 L3141.6,1817.1 L3139.0,1816.8 L3136.3,1816.5 L3133.7,1816.1 L3131.0,1815.8 L3128.4,1815.4 M3127.6,1850.6 L3130.4,1849.6 L3133.2,1848.5 L3136.0,1847.5 L3138.8,1846.4 L3141.5,1845.4 L3144.3,1844.2 L3146.9,1843.1 L3145.7,1847.5 L3144.4,1851.8 L3143.0,1856.1 L3141.5,1860.5 L3139.9,1864.8 L3136.9,1868.6 L3133.8,1872.3 L3134.4,1876.1 L3135.1,1880.0 L3135.7,1883.8 L3136.2,1887.7 L3133.1,1887.7 L3129.9,1887.8 M3142.6,1871.4 L3145.7,1872.4 L3148.9,1873.3 L3152.1,1874.3 L3155.3,1875.2 L3158.4,1876.1 L3161.6,1877.0 L3164.7,1877.9 L3167.9,1878.7 L3171.1,1877.2 L3174.3,1875.7 L3178.1,1875.8 L3181.9,1875.8 M3174.8,1939.5 L3178.0,1937.8 L3181.1,1936.0 L3184.2,1934.3 L3187.3,1932.5 L3190.3,1930.7 L3192.8,1928.4 L3195.3,1926.2 L3197.8,1923.9 L3200.2,1921.5 L3202.6,1919.2 L3204.9,1916.9 L3207.2,1914.5 L3208.9,1910.0 L3210.5,1905.4 L3212.0,1900.8 L3213.4,1896.2 L3214.8,1891.7 M3183.9,1826.5 L3186.1,1825.3 L3188.4,1824.1 L3190.6,1822.9 L3192.8,1821.6 L3194.9,1820.3 L3197.0,1819.1 L3199.1,1817.8 L3203.1,1819.7 L3207.1,1821.5 L3209.1,1824.7 L3211.0,1827.8 L3213.0,1831.0 L3214.9,1834.1 L3216.7,1837.3 L3218.6,1840.5 L3218.9,1844.7 L3219.1,1848.9 L3220.9,1852.0 L3222.7,1855.2 L3224.4,1858.4 L3226.1,1861.5 L3227.8,1864.7 L3229.4,1867.9 M3219.1,1848.9 L3221.2,1847.7 L3223.3,1846.5 L3225.4,1845.4 L3227.4,1844.2 L3229.3,1842.9 L3231.3,1841.7 L3233.2,1840.5 L3234.2,1836.6 L3235.0,1832.8 L3235.9,1829.0 L3236.6,1825.2 L3235.9,1820.5 L3235.1,1815.8 L3234.2,1811.1 L3232.5,1807.3 L3230.6,1803.4 L3228.8,1799.6 L3230.0,1797.5 L3231.2,1795.4 L3232.4,1793.3 L3233.5,1791.1 M3207.1,1821.5 L3208.5,1819.2 L3209.8,1816.9 L3211.2,1814.6 L3212.4,1812.2 L3213.6,1809.9 L3214.8,1807.6 L3215.9,1805.2 L3217.6,1804.1 L3219.2,1803.0 L3220.8,1801.9 L3222.4,1800.7 L3223.9,1799.6 L3225.6,1798.2 L3227.3,1796.8 L3228.9,1795.4 L3230.5,1794.0 L3232.0,1792.6 L3233.5,1791.1 M3134.4,1773.8 L3136.3,1773.0 L3138.1,1772.2 L3140.0,1771.4 L3141.8,1770.5 L3143.7,1769.7 L3145.5,1768.8 L3147.2,1768.0 L3149.0,1767.1 L3150.7,1766.2 L3152.4,1765.3 L3153.1,1762.8 L3153.6,1760.4 L3154.1,1757.9 L3154.6,1755.5 L3155.0,1753.1 L3155.4,1750.6 L3155.6,1748.2 L3155.9,1745.9 L3156.9,1744.6 L3158.0,1743.3 L3159.0,1742.1 L3160.0,1740.8 L3160.9,1739.5 L3161.9,1738.2 L3162.8,1736.9 L3163.6,1735.6 L3164.5,1734.3 L3165.3,1733.0 L3166.1,1731.7 L3167.5,1731.1 L3168.9,1730.4 L3170.2,1729.7 L3171.6,1729.0 L3172.9,1728.3 L3174.2,1727.6 L3175.5,1726.9 L3176.8,1726.2 L3178.1,1725.4 L3179.3,1724.7 L3180.5,1723.9 L3184.2,1725.3 L3187.9,1726.6 L3191.5,1728.0 L3195.2,1729.3 L3196.6,1728.7 L3198.1,1728.1 L3199.5,1727.5 L3200.9,1726.9 L3202.2,1726.3 L3203.6,1725.7 L3204.9,1725.0 L3206.2,1724.3 L3207.4,1723.7 L3208.6,1723.0 M3164.5,1795.7 L3168.5,1798.3 L3172.5,1800.9 L3176.5,1803.5 L3180.5,1806.0 L3180.8,1801.5 L3180.9,1797.0 L3180.9,1792.5 L3180.9,1788.1 L3180.7,1783.7 L3183.3,1783.7 L3186.0,1783.8 L3188.6,1783.8 L3191.3,1783.8 L3193.9,1783.8 L3197.3,1785.2 L3200.6,1786.5 L3204.0,1787.9 L3207.3,1789.2 L3207.6,1785.7 L3207.9,1782.2 L3208.0,1778.7 L3209.2,1777.3 L3210.4,1775.9 L3211.6,1774.4 L3212.7,1773.0 L3213.8,1771.5 L3214.8,1770.1 L3215.9,1768.6 L3217.0,1767.3 L3218.1,1766.0 L3219.2,1764.7 L3220.2,1763.4 L3221.2,1762.1 L3222.2,1760.8 L3223.2,1759.4 L3224.1,1758.1 L3222.6,1753.9 L3221.1,1749.8 L3219.4,1745.8 L3217.8,1741.9 L3216.2,1738.0 L3214.4,1734.1 L3212.6,1730.4 L3210.6,1726.6 L3208.6,1723.0 M3180.5,1806.0 L3182.8,1805.5 L3185.0,1805.0 L3187.2,1804.5 L3189.4,1804.0 L3191.5,1803.4 L3193.7,1802.8 L3195.8,1802.3 L3197.9,1801.7 L3200.0,1801.0 L3203.3,1802.0 L3206.5,1803.0 L3209.8,1803.9 L3213.0,1804.8 L3216.2,1805.6 M3214.2,1789.8 L3216.2,1789.1 L3218.1,1788.4 L3220.0,1787.7 L3221.9,1787.0 L3223.8,1786.3 L3225.6,1785.6 M3242.9,1790.7 L3245.5,1792.7 L3248.1,1794.7 L3250.6,1796.7 L3253.1,1798.7 L3255.6,1800.6 L3258.0,1802.6 L3260.4,1804.5 L3262.0,1804.0 L3263.5,1803.4 L3265.1,1802.9 L3266.6,1802.3 L3268.0,1801.7 L3269.4,1801.1 L3270.8,1800.5 L3272.1,1799.8 L3273.4,1799.2 L3274.7,1798.5 L3275.5,1796.8 L3276.3,1795.1 L3277.0,1793.3 L3277.7,1791.6 L3278.3,1789.8 L3278.6,1787.8 L3278.9,1785.7 L3279.1,1783.7 L3279.3,1781.7 L3279.4,1779.6 L3279.5,1777.6 L3279.6,1775.6 M3250.1,1857.7 L3249.8,1853.5 L3249.5,1849.3 L3249.0,1845.1 L3248.6,1841.0 L3248.0,1836.8 L3248.3,1832.5 L3248.5,1828.3 L3248.6,1824.0 L3248.6,1819.8 L3247.2,1814.5 L3245.7,1809.3 L3245.1,1804.7 L3244.3,1800.1 L3243.5,1795.6 L3242.6,1791.1 M3208.6,1723.0 L3208.8,1721.4 L3209.0,1719.9 L3209.1,1718.4 L3209.2,1716.9 L3209.2,1715.4 L3209.3,1713.9 L3209.2,1712.4 L3209.2,1710.9 L3209.1,1709.4 L3209.0,1707.9 L3208.9,1706.4 L3208.8,1704.9 L3208.6,1703.4 L3208.4,1701.9 L3208.1,1700.4 L3207.0,1698.2 L3205.9,1696.0 L3204.7,1693.9 L3203.4,1691.7 L3202.2,1689.6 L3203.2,1689.1 L3204.2,1688.6 L3205.2,1688.1 L3206.2,1687.6 L3207.1,1687.1 L3208.0,1686.6 L3208.8,1686.0 L3208.6,1684.8 L3208.5,1683.6 L3208.2,1682.4 L3208.0,1681.2 L3207.7,1680.0 L3207.4,1678.8 L3207.0,1677.6 L3206.6,1676.4 L3206.2,1675.2 L3205.8,1674.0 L3205.3,1672.8 L3204.8,1671.6 L3206.4,1671.7 L3207.9,1671.8 L3209.3,1671.9 L3210.7,1672.0 L3212.0,1672.1 L3213.4,1673.8 L3214.9,1675.5 L3216.3,1677.3 L3217.7,1679.0 L3219.1,1680.8 L3220.4,1682.6 L3221.7,1684.4 L3223.0,1686.2 L3224.2,1688.0 L3225.4,1689.9 L3226.6,1691.7 L3227.9,1693.7 L3229.1,1695.7 L3230.3,1697.7 L3231.5,1699.7 L3232.7,1701.7 L3233.8,1703.8 L3234.9,1705.9 L3235.9,1707.9 L3237.0,1710.0 L3237.2,1711.5 L3237.4,1713.1 L3237.5,1714.6 L3237.7,1716.1 L3237.7,1717.6 L3237.8,1719.1 L3237.8,1720.6 L3237.8,1722.1 L3237.7,1723.6 L3237.6,1725.1 L3237.4,1726.6 L3237.3,1728.2 L3235.8,1728.4 L3234.4,1728.7 L3232.8,1728.9 L3231.3,1729.2 L3229.7,1729.4 L3228.1,1729.6 L3226.4,1729.8 L3223.6,1728.7 L3220.7,1727.6 L3217.7,1726.4 L3214.7,1725.3 L3211.7,1724.1 L3208.6,1723.0 M3279.6,1775.6 L3281.5,1777.9 L3283.4,1780.2 L3285.3,1782.5 L3287.1,1784.8 L3288.6,1786.3 L3290.1,1787.7 L3291.5,1789.2 L3292.8,1790.6 L3294.1,1792.1 L3294.9,1795.5 L3295.5,1798.9 L3296.2,1802.3 L3296.7,1805.7 L3298.1,1808.6 L3299.4,1811.6 L3300.7,1814.5 L3301.9,1817.5 L3303.1,1820.5 M3291.5,1776.2 L3292.8,1778.6 L3294.0,1781.1 L3295.1,1783.5 L3296.3,1785.9 L3297.3,1788.4 L3298.4,1790.9 L3299.4,1793.3 L3300.3,1795.8 L3301.3,1798.3 L3302.1,1800.9 L3303.3,1804.8 L3304.5,1808.8 L3305.6,1812.8 L3306.6,1816.9 L3307.6,1820.9 M2837.5,1674.4 L2838.1,1673.2 L2838.7,1672.0 L2839.4,1670.8 L2840.1,1669.6 L2840.8,1668.4 L2841.6,1667.2 L2842.4,1666.1 L2843.2,1664.9 L2844.0,1663.7 L2844.9,1662.5 L2845.8,1661.4 L2846.7,1660.2 L2847.6,1659.1 L2848.6,1657.9 L2849.6,1656.8 L2850.6,1655.7 L2851.7,1654.5 L2852.7,1653.4 L2853.8,1652.3 L2854.9,1651.2 L2856.1,1650.1 L2857.3,1649.0 L2858.5,1648.0 L2859.7,1646.9 L2860.9,1645.8 L2862.2,1644.8 L2863.5,1643.7 L2864.8,1642.7 L2866.2,1641.7 L2867.5,1640.6 L2868.9,1639.6 L2870.3,1638.6 L2871.7,1637.6 L2873.2,1636.7 L2874.7,1635.7 L2876.2,1634.7 L2877.7,1633.8 L2879.2,1632.8 L2880.8,1631.9 L2882.4,1631.0 M2837.5,1674.4 L2836.4,1676.0 L2835.3,1677.6 L2834.3,1679.2 L2833.2,1680.8 L2832.3,1682.5 L2831.3,1684.1 L2830.4,1685.8 L2829.5,1687.4 L2827.9,1689.6 L2826.3,1691.8 L2824.8,1694.0 L2823.3,1696.2 L2821.8,1698.4 L2820.3,1700.7 L2818.9,1703.0 L2817.6,1705.3 L2816.2,1707.7 L2815.0,1709.9 L2813.9,1712.2 L2812.8,1714.4 L2811.7,1716.7 L2810.7,1719.0 L2811.9,1719.7 L2813.0,1720.3 L2814.2,1720.9 L2815.5,1721.6 L2816.8,1722.2 L2817.8,1722.9 L2818.7,1723.6 L2819.8,1724.3 L2820.8,1725.0 L2821.9,1725.6 L2823.0,1726.3 L2824.1,1727.0 L2825.3,1727.6 L2826.5,1728.2 L2827.7,1728.9 L2824.8,1732.8 L2822.0,1736.7 M2775.2,1730.2 L2773.4,1733.1 L2771.6,1736.0 M2951.7,1605.7 L2953.3,1605.7 L2954.9,1605.8 L2956.5,1605.8 L2958.1,1606.0 L2959.8,1606.2 L2961.4,1606.4 L2963.1,1606.7 L2964.7,1607.0 L2966.4,1607.3 L2968.1,1607.8 L2969.8,1608.2 L2971.4,1608.7 L2973.2,1609.3 M2881.8,1695.1 L2879.2,1698.0 L2876.7,1701.0 L2874.2,1704.1 L2871.8,1707.2 L2869.5,1710.4 L2867.2,1713.6 L2865.0,1716.9 L2862.9,1720.3 L2860.9,1723.7 L2858.9,1727.1 L2857.0,1730.7 M2881.5,1653.9 L2882.0,1653.0 L2882.5,1652.0 L2883.0,1651.1 L2883.5,1650.2 L2884.1,1649.3 L2884.7,1648.3 L2885.3,1647.4 L2885.9,1646.5 L2886.6,1645.6 L2887.3,1644.7 L2888.0,1643.8 L2888.7,1642.9 L2889.4,1642.0 L2890.2,1641.1 L2891.0,1640.2 L2891.8,1639.3 L2892.6,1638.5 L2893.4,1637.6 L2894.3,1636.7 L2895.2,1635.9 L2896.1,1635.0 L2897.0,1634.2 L2897.9,1633.4 L2898.9,1632.5 L2899.9,1631.7 L2900.9,1630.9 L2901.9,1630.1 L2902.9,1629.3 L2904.0,1628.5 L2905.0,1627.7 L2906.1,1626.9 L2907.2,1626.1 L2908.4,1625.4 L2909.5,1624.6 L2910.7,1623.9 M2877.5,1640.6 L2874.8,1641.6 L2872.1,1642.6 L2869.4,1643.7 L2866.8,1644.8 L2864.2,1646.0 L2861.6,1647.1 L2859.1,1648.4 L2856.6,1649.7 M2887.1,1644.9 L2884.1,1645.8 L2881.2,1646.7 L2878.2,1647.7 L2875.3,1648.7 L2872.4,1649.8 L2869.5,1650.9 L2866.7,1652.1 L2863.9,1653.2 L2861.1,1654.5 L2858.3,1655.7 L2855.6,1657.0 L2852.9,1658.3 L2850.2,1659.7 L2847.5,1661.1 L2844.9,1662.5 M2876.5,1674.2 L2873.3,1675.8 L2870.1,1677.4 L2867.0,1679.1 L2863.9,1680.8 L2860.8,1682.6 L2857.7,1684.4 L2854.6,1686.2 L2851.6,1688.1 L2848.6,1690.0 L2845.7,1691.9 L2842.7,1693.8" fill="none" stroke="#ffffff" stroke-width="1.1" stroke-opacity="0.75" stroke-linejoin="round"/>
<path d="M3018.4,1776.2 L3020.1,1776.6 L3021.9,1776.9 L3023.7,1777.3 L3025.5,1777.6 L3027.1,1778.0 L3028.8,1778.3 L3030.5,1778.7 L3032.2,1779.0 L3033.8,1779.3 L3035.6,1782.5 L3036.8,1786.7 L3037.3,1789.1 L3037.9,1791.4 L3038.5,1793.8 L3036.8,1794.5 L3035.0,1795.3 L3033.2,1796.0 L3031.5,1796.7 L3029.7,1797.4 L3031.5,1799.5 L3033.3,1801.5 L3035.2,1803.5 L3032.7,1807.0 L3032.8,1810.4 L3030.9,1810.5 L3029.0,1810.7 L3027.0,1810.8 L3025.1,1810.9 L3023.2,1811.0 L3021.4,1810.9 L3019.6,1810.8 L3017.8,1810.7 L3016.0,1810.6 L3014.3,1810.4 L3015.4,1807.1 L3016.5,1803.7 L3014.5,1802.9 L3012.5,1802.0 L3010.6,1801.1 L3010.1,1798.0 L3009.6,1794.9 L3011.0,1792.3 L3012.4,1789.7 L3013.2,1786.4 L3014.0,1783.1 L3016.2,1781.8 L3018.3,1780.4Z M3199.5,1891.4 L3201.5,1890.2 L3203.5,1889.0 L3205.4,1887.7 L3207.4,1886.4 L3208.9,1883.2 L3210.3,1880.0 L3211.3,1875.1 L3213.2,1876.2 L3214.0,1879.6 L3213.4,1883.7 L3213.5,1886.4 L3213.6,1889.1 L3213.6,1891.7 L3211.9,1892.8 L3210.1,1893.8 L3208.3,1894.8 L3206.5,1895.8 L3204.7,1896.8 L3202.9,1897.8 L3201.8,1895.7 L3200.6,1893.5Z" fill="#2e2a87"/>
</g>
<ellipse cx="3022.5" cy="1883.0" rx="292.0" ry="287.5" fill="none" stroke="#3d3b8e" stroke-width="2.2"/>
<path d="M3022.5,1782.1 L3027.7,1784.1 L3032.9,1786.1 L3038.0,1788.1 L3043.2,1790.2 L3048.4,1792.3 L3053.5,1794.5 L3058.6,1796.7 L3063.8,1798.9 L3068.9,1801.1 L3074.0,1803.4 L3079.1,1805.7 L3084.1,1808.1 L3089.1,1810.4 L3094.1,1812.8 L3099.1,1815.2 L3104.1,1817.7 L3109.0,1820.1 L3113.9,1822.6 L3118.7,1825.1 L3123.6,1827.7 L3128.4,1830.2 L3133.1,1832.8 L3137.8,1835.4 L3142.5,1838.0 L3147.1,1840.6 L3151.7,1843.2 L3156.2,1845.9 L3160.7,1848.6 L3165.1,1851.2 L3169.5,1853.9 L3173.8,1856.6 L3178.0,1859.3 L3182.2,1862.1 L3186.4,1864.8 L3190.5,1867.5 L3194.5,1870.3 L3198.5,1873.0 L3202.4,1875.8 L3206.2,1878.5 L3210.0,1881.3" fill="none" stroke="#1976d2" stroke-width="2.6" stroke-linecap="round"/>
</svg>
<div class="t" style="left:1626.06px;top:40.09px;font-size:39.42px;color:#8f959f;transform:scaleX(1.0596);">Portal.freightcollab.com</div>
<div class="t" style="left:73.36px;top:349.24px;font-size:39.13px;color:#ffffff;font-weight:bold;-webkit-text-stroke:1.4px #ffffff;transform:scaleX(1.0390);">Freight Collab</div>
<div class="t" style="left:116.95px;top:439.39px;font-size:26.96px;color:#c9ccd3;font-weight:bold;transform:scaleX(0.8829);">Dashboard</div>
<div class="t" style="left:117.03px;top:531.99px;font-size:26.96px;color:#c9ccd3;font-weight:bold;transform:scaleX(0.8405);">Inbox</div>
<div class="t" style="left:117.58px;top:624.79px;font-size:26.96px;color:#c9ccd3;font-weight:bold;transform:scaleX(0.8527);">Quote Requests</div>
<div class="t" style="left:117.93px;top:717.69px;font-size:26.96px;color:#c9ccd3;font-weight:bold;transform:scaleX(0.8461);">Shipments</div>
<div class="t" style="left:419.83px;top:536.87px;font-size:19.57px;color:#ffffff;font-weight:bold;transform:scaleX(1.1474);">2</div>
<div class="t" style="left:647.09px;top:147.69px;font-size:25.07px;color:#ffffff;font-weight:bold;transform:scaleX(0.9118);">Create Quote Request</div>
<div class="t" style="left:1403.87px;top:277.78px;font-size:24.49px;color:#2b2e6e;-webkit-text-stroke:0.25px #2b2e6e;transform:scaleX(1.0283);">Quote Requests</div>
<div class="t" style="left:3273.85px;top:277.78px;font-size:24.49px;color:#6b7280;-webkit-text-stroke:0.15px #6b7280;transform:scaleX(1.0461);">Shipments</div>
<div class="t" style="left:1222.40px;top:414.93px;font-size:34.78px;color:#1a2233;-webkit-text-stroke:0.9px #1a2233;transform:scaleX(1.0213);">Quote Status</div>
<div class="t" style="left:1380.76px;top:581.59px;font-size:18.84px;color:#333333;">New</div>
<div class="t" style="left:2076.75px;top:579.99px;font-size:19.42px;color:#ffffff;font-weight:bold;">9</div>
<div class="t" style="left:1337.95px;top:749.39px;font-size:18.84px;color:#333333;">Quotation</div>
<div class="t" style="left:1576.37px;top:747.79px;font-size:19.42px;color:#ffffff;font-weight:bold;">2</div>
<div class="t" style="left:1255.20px;top:917.19px;font-size:18.84px;color:#333333;">Booking Requested</div>
<div class="t" style="left:1718.66px;top:915.59px;font-size:19.42px;color:#ffffff;font-weight:bold;">4</div>
<div class="t" style="left:1355.75px;top:1085.04px;font-size:18.84px;color:#333333;">Booked</div>
<div class="t" style="left:2209.79px;top:1083.44px;font-size:19.42px;color:#ffffff;font-weight:bold;">11</div>
<div class="t" style="left:1439.39px;top:1197.76px;font-size:18.41px;color:#333333;">0</div>
<div class="t" style="left:1582.31px;top:1197.76px;font-size:18.41px;color:#333333;">2</div>
<div class="t" style="left:1725.37px;top:1197.76px;font-size:18.41px;color:#333333;">4</div>
<div class="t" style="left:1868.20px;top:1197.76px;font-size:18.41px;color:#333333;">6</div>
<div class="t" style="left:2011.26px;top:1197.76px;font-size:18.41px;color:#333333;">8</div>
<div class="t" style="left:2148.74px;top:1197.76px;font-size:18.41px;color:#333333;">10</div>
<div class="t" style="left:2291.80px;top:1197.76px;font-size:18.41px;color:#333333;">12</div>
<div class="t" style="left:2467.01px;top:425.52px;font-size:35.51px;color:#1a2233;-webkit-text-stroke:0.9px #1a2233;transform:scaleX(0.9938);">Quote Requests Information</div>
<div class="t" style="left:3314.16px;top:429.07px;font-size:23.33px;color:#1e293b;-webkit-text-stroke:0.2px #1e293b;transform:scaleX(1.0505);">1 - 3</div>
<div class="t" style="left:3369.68px;top:429.07px;font-size:23.33px;color:#4f5f76;-webkit-text-stroke:0.2px #4f5f76;transform:scaleX(1.0981);">of</div>
<div class="t" style="left:3396.91px;top:429.07px;font-size:23.33px;color:#1e293b;-webkit-text-stroke:0.2px #1e293b;transform:scaleX(0.9680);">15</div>
<div class="t" style="left:2467.27px;top:535.21px;font-size:26.81px;color:#1b2433;-webkit-text-stroke:0.25px #1b2433;transform:scaleX(1.1034);">QR24000302</div>
<div class="t" style="left:2467.64px;top:574.28px;font-size:20.72px;color:#5f7189;transform:scaleX(1.0318);">Sep 20, 2024</div>
<div class="t" style="left:2467.66px;top:603.92px;font-size:21.74px;color:#5f7189;transform:scaleX(0.9617);">Sea FCL Direct</div>
<div class="t" style="left:2466.54px;top:647.13px;font-size:26.09px;color:#5b6b80;transform:scaleX(0.9890);">Port of Jebel Ali</div>
<div class="t" style="left:2695.84px;top:647.13px;font-size:26.09px;color:#5b6b80;transform:scaleX(0.9874);">Hamburg</div>
<div class="t" style="left:3349.66px;top:536.53px;font-size:24.20px;color:#7b7b7b;font-weight:bold;transform:scaleX(1.0405);">New</div>
<div class="t" style="left:3458.10px;top:548.58px;font-size:20.72px;color:#1a2233;-webkit-text-stroke:0.65px #1a2233;transform:scaleX(1.0783);">View Info</div>
<div class="t" style="left:3255.87px;top:648.60px;font-size:23.77px;color:#627490;transform:scaleX(1.0382);">Containers: 1</div>
<div class="t" style="left:2467.27px;top:785.81px;font-size:26.81px;color:#1b2433;-webkit-text-stroke:0.25px #1b2433;transform:scaleX(1.1015);">QR24000300</div>
<div class="t" style="left:2467.66px;top:824.88px;font-size:20.72px;color:#5f7189;transform:scaleX(1.0080);">Sep 16, 2024</div>
<div class="t" style="left:2467.66px;top:854.52px;font-size:21.74px;color:#5f7189;transform:scaleX(0.9617);">Sea FCL Direct</div>
<div class="t" style="left:2466.54px;top:897.73px;font-size:26.09px;color:#5b6b80;transform:scaleX(0.9890);">Port of Jebel Ali</div>
<div class="t" style="left:2695.84px;top:897.73px;font-size:26.09px;color:#5b6b80;transform:scaleX(0.9874);">Hamburg</div>
<div class="t" style="left:3349.66px;top:787.13px;font-size:24.20px;color:#7b7b7b;font-weight:bold;transform:scaleX(1.0405);">New</div>
<div class="t" style="left:3458.10px;top:799.18px;font-size:20.72px;color:#1a2233;-webkit-text-stroke:0.65px #1a2233;transform:scaleX(1.0783);">View Info</div>
<div class="t" style="left:3255.87px;top:899.20px;font-size:23.77px;color:#627490;transform:scaleX(1.0382);">Containers: 1</div>
<div class="t" style="left:2467.29px;top:1036.21px;font-size:26.81px;color:#1b2433;-webkit-text-stroke:0.25px #1b2433;transform:scaleX(1.0881);">QR24000299</div>
<div class="t" style="left:2467.66px;top:1075.28px;font-size:20.72px;color:#5f7189;transform:scaleX(1.0080);">Sep 16, 2024</div>
<div class="t" style="left:2467.66px;top:1104.92px;font-size:21.74px;color:#5f7189;transform:scaleX(0.9617);">Sea FCL Direct</div>
<div class="t" style="left:2474.34px;top:1154.53px;font-size:26.09px;color:#5b6b80;transform:scaleX(0.9890);">Port of Jebel Ali</div>
<div class="t" style="left:2703.64px;top:1154.53px;font-size:26.09px;color:#5b6b80;transform:scaleX(0.9874);">Hamburg</div>
<div class="t" style="left:3178.44px;top:1037.53px;font-size:24.20px;color:#c9963a;font-weight:bold;transform:scaleX(0.9884);">Booking Requested</div>
<div class="t" style="left:3458.10px;top:1049.58px;font-size:20.72px;color:#1a2233;-webkit-text-stroke:0.65px #1a2233;transform:scaleX(1.0783);">View Info</div>
<div class="t" style="left:3255.87px;top:1149.60px;font-size:23.77px;color:#627490;transform:scaleX(1.0382);">Containers: 1</div>
<div class="t" style="left:1361.88px;top:1374.63px;font-size:24.78px;color:#737a86;-webkit-text-stroke:0.15px #737a86;transform:scaleX(1.0540);">Transport Type Distribution</div>
<div class="t" style="left:1951.76px;top:1374.63px;font-size:24.78px;color:#2a2b6e;-webkit-text-stroke:0.35px #2a2b6e;transform:scaleX(1.0233);">Shipments vs Quotes</div>
<div class="t" style="left:1650.46px;top:1470.66px;font-size:22.75px;color:#6b7280;transform:scaleX(0.9147);">Shipments: 11</div>
<div class="t" style="left:1798.03px;top:1470.66px;font-size:22.75px;color:#6b7280;transform:scaleX(0.9501);">Quotes: 26</div>
<div class="t" style="left:1723.59px;top:1665.89px;font-size:23.19px;color:#ffffff;font-weight:bold;transform:scaleX(0.8807);text-shadow:1px 1px 2px rgba(0,0,0,0.6)">29.7%</div>
<div class="t" style="left:1351.18px;top:1937.99px;font-size:23.19px;color:#ffffff;font-weight:bold;transform:scaleX(0.8839);text-shadow:1px 1px 2px rgba(0,0,0,0.6)">70.3%</div>
<div class="t" style="left:1958.79px;top:1564.88px;font-size:22.03px;color:#444444;transform:scaleX(0.9217);">Shipments</div>
<div class="t" style="left:1958.79px;top:1599.08px;font-size:22.03px;color:#444444;transform:scaleX(0.9183);">Quotes</div>
<div class="t" style="left:2468.00px;top:1392.63px;font-size:34.78px;color:#1a2233;-webkit-text-stroke:0.7px #1a2233;transform:scaleX(1.0026);">Top Routes Map</div>
<div class="t" style="left:2466.36px;top:1439.98px;font-size:26.38px;color:#1a2233;-webkit-text-stroke:0.6px #1a2233;transform:scaleX(1.1068);">Hamburg, Germany</div>
<div class="t" style="left:2764.46px;top:1439.98px;font-size:26.38px;color:#1a2233;-webkit-text-stroke:0.6px #1a2233;transform:scaleX(1.1154);">Jebel Ali, United Arab Emirates</div>
<div class="t" style="left:2497.30px;top:1505.87px;font-size:23.91px;color:#333333;transform:scaleX(0.9649);">Air</div>
<div class="t" style="left:2561.63px;top:1505.87px;font-size:23.91px;color:#333333;transform:scaleX(0.9936);">Sea</div>
</body></html>
